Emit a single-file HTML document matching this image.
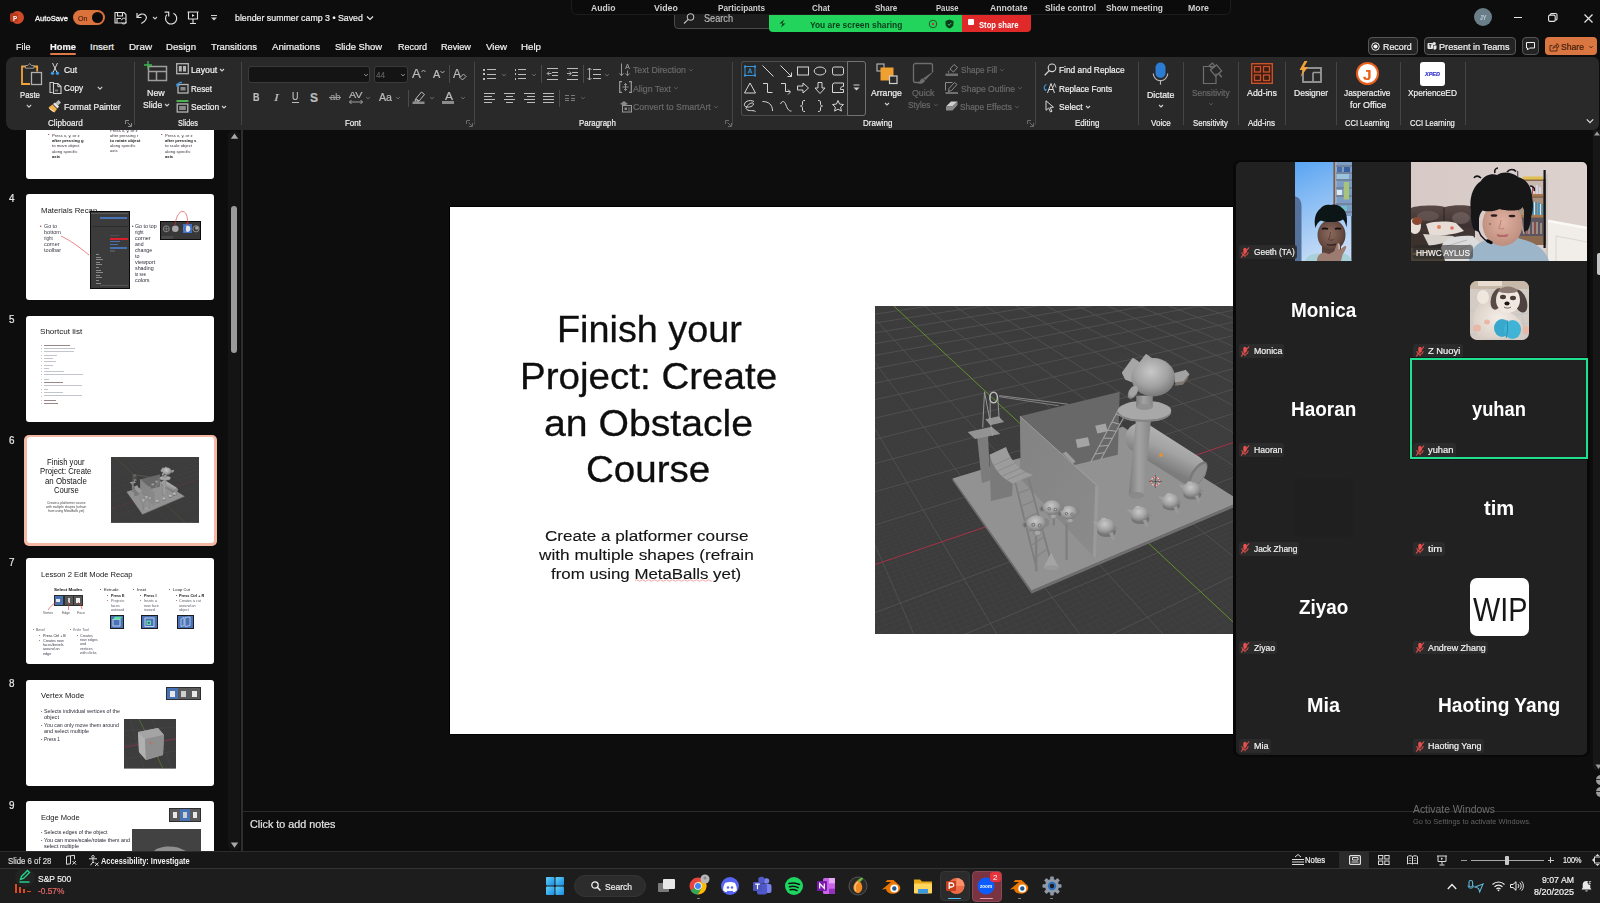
<!DOCTYPE html>
<html lang="en">
<head>
<meta charset="utf-8">
<title>blender summer camp 3 - PowerPoint</title>
<style>
*{box-sizing:border-box;margin:0;padding:0}
html,body{width:1600px;height:903px;overflow:hidden;background:#0d0d0d}
body{font-family:"Liberation Sans","DejaVu Sans",sans-serif;color:#fff;position:relative}
#root{position:absolute;left:0;top:0;width:1600px;height:903px;overflow:hidden;background:#0d0d0d}
.a{position:absolute;white-space:nowrap}
.t{position:absolute;white-space:nowrap;line-height:1;transform-origin:0 0;-webkit-text-stroke:0.2px currentColor}
svg{position:absolute;overflow:visible}
</style>
</head>
<body>
<div id="root">
<!-- ===== ribbon background ===== -->
<div class="a" id="ribbon" style="left:6px;top:57px;width:1593px;height:72.500px;background:#292929;border-radius:8px 6px 6px 8px"></div>

<!-- ===== thumbnail pane ===== -->
<div class="a" id="thumbpane" style="left:0;top:130px;width:242px;height:721px;overflow:hidden">
</div>
<div class="a" style="left:228px;top:131px;width:11.500px;height:719px;background:#141414;border-radius:5px"></div>
<div class="a" style="left:241px;top:130px;width:1.600px;height:721px;background:#2e2e2e"></div>
<!-- scrollbar -->
<div class="a" style="left:231px;top:206px;width:6px;height:147px;background:#9a9a9a;border-radius:3px"></div>
<svg style="left:230px;top:133px" width="9" height="7"><path d="M4.500 0.600L8.200 5.800H0.800Z" fill="#a8a8a8"/></svg>
<svg style="left:230px;top:842px" width="9" height="7"><path d="M0.800 0.600H8.200L4.500 5.800Z" fill="#a8a8a8"/></svg>

<!-- ===== main slide ===== -->
<div class="a" id="slide" style="left:449px;top:206px;width:786px;height:529px;background:#000"></div>
<div class="a" style="left:450px;top:207px;width:783px;height:527px;background:#fff;overflow:hidden" id="slidein">
  
</div>

<!-- notes -->
<div class="a" style="left:242px;top:811px;width:1358px;height:1px;background:#2b2b2b"></div>

<!-- ===== status bar ===== -->
<div class="a" style="left:0;top:851px;width:1600px;height:17.500px;background:#171717;border-top:1px solid #2c2c2c"></div>
<!-- ===== taskbar ===== -->
<div class="a" style="left:0;top:868px;width:1600px;height:35px;background:#1d1d1d;border-top:1px solid #333"></div>

<!-- ===== zoom gallery panel ===== -->
<div class="a" style="left:1233px;top:160px;width:357px;height:597px;background:#080808;border-radius:7px"></div>
<div class="a" id="zp" style="left:1236px;top:162px;width:351px;height:593px;background:#212121;border-radius:5px;overflow:hidden"></div>
<!-- ===== title bar ===== -->
<div class="a" style="left:11px;top:11px;width:13px;height:13px;border-radius:50%;background:#d04a28"></div>
<div class="a" style="left:10px;top:13px;width:8px;height:9px;border-radius:2px;background:#b83a1c"></div>
<div class="t" style="left:12.8px;top:15.10px;font-size:8px;color:#fff;font-weight:700;transform:scaleX(0.787);-webkit-text-stroke:0;">P</div>
<div class="t" style="left:35.0px;top:15.10px;font-size:7.8px;color:#f4f4f4;transform:scaleX(0.976);-webkit-text-stroke:0.3px #f4f4f4;">AutoSave</div>
<div class="a" style="left:73px;top:10px;width:32px;height:15px;border-radius:8px;background:#dc723c"></div>
<div class="t" style="left:78.0px;top:15.10px;font-size:7.4px;color:#5a2a10;transform:scaleX(0.962);">On</div>
<div class="a" style="left:92px;top:12px;width:11px;height:11px;border-radius:50%;background:#0a0a0a"></div>
<svg style="left:114px;top:11px" width="13" height="13"><path d="M1 1.5h9l2 2v8.5h-11z M3.5 1.5v3.5h5v-3.5 M3 12v-4.5h4" fill="none" stroke="#e0e0e0" stroke-width="1.1"/><path d="M7.5 9.2a2.4 2.4 0 0 1 4.3-1 M12 11a2.4 2.4 0 0 1-4.3 1" fill="none" stroke="#e0e0e0" stroke-width="1"/></svg>
<svg style="left:135px;top:11px" width="14" height="14"><path d="M2 2v4.5h4.5" fill="none" stroke="#e0e0e0" stroke-width="1.2"/><path d="M2.3 6.2C4 3 8 2 10.3 4.2c2.2 2.2 1.2 5.5-4 8.3" fill="none" stroke="#e0e0e0" stroke-width="1.2"/></svg>
<svg style="left:151px;top:14px" width="8" height="8"><path d="M2 3.0 L4 5.0 L6 3.0" fill="none" stroke="#c8c8c8" stroke-width="1.1"/></svg>
<svg style="left:164px;top:11px" width="14" height="14"><path d="M9.400 2.300A5.600 5.600 0 1 1 2.900 3.700" fill="none" stroke="#e0e0e0" stroke-width="1.200"/><path d="M0.600 1.200h4.100v4.300" fill="none" stroke="#e0e0e0" stroke-width="1.200"/></svg>
<svg style="left:187px;top:11px" width="12" height="14"><path d="M0.5 1h11 M1.5 1v7h9v-7 M6 8v4 M3 12.5h6" fill="none" stroke="#e0e0e0" stroke-width="1.1"/><path d="M5 3v3l2.5-1.5z" fill="#e0e0e0"/></svg>
<svg style="left:210px;top:15px" width="8" height="7"><path d="M1 0.5h6" stroke="#d0d0d0" stroke-width="1"/><path d="M1 2.5h6l-3 3z" fill="#d0d0d0"/></svg>
<div class="t" style="left:235.0px;top:13.10px;font-size:9.6px;color:#f2f2f2;transform:scaleX(0.918);">blender summer camp 3 • Saved</div>
<svg style="left:366px;top:13.5px" width="8" height="8"><path d="M1 2.5 L4 5.5 L7 2.5" fill="none" stroke="#e8e8e8" stroke-width="1.2"/></svg>
<div class="a" style="left:674px;top:4px;width:150px;height:25px;border-radius:4px;background:#1d1d1d;border:1px solid #4a4a4a"></div>
<div class="a" style="left:571px;top:-6px;width:660px;height:21px;border-radius:6px;background:#0b0b0b;border:1px solid #1c1c1c"></div>
<div class="t" style="left:591.3px;top:4.10px;font-size:9.3px;color:#cfcfcf;font-weight:700;transform:scaleX(0.926);-webkit-text-stroke:0;">Audio</div>
<div class="t" style="left:653.7px;top:4.10px;font-size:9.3px;color:#cfcfcf;font-weight:700;transform:scaleX(0.946);-webkit-text-stroke:0;">Video</div>
<div class="t" style="left:717.8px;top:4.10px;font-size:9.3px;color:#cfcfcf;font-weight:700;transform:scaleX(0.887);-webkit-text-stroke:0;">Participants</div>
<div class="t" style="left:812.0px;top:4.10px;font-size:9.3px;color:#cfcfcf;font-weight:700;transform:scaleX(0.871);-webkit-text-stroke:0;">Chat</div>
<div class="t" style="left:874.7px;top:4.10px;font-size:9.3px;color:#cfcfcf;font-weight:700;transform:scaleX(0.863);-webkit-text-stroke:0;">Share</div>
<div class="t" style="left:936.0px;top:4.10px;font-size:9.3px;color:#cfcfcf;font-weight:700;transform:scaleX(0.825);-webkit-text-stroke:0;">Pause</div>
<div class="t" style="left:990.0px;top:4.10px;font-size:9.3px;color:#cfcfcf;font-weight:700;transform:scaleX(0.931);-webkit-text-stroke:0;">Annotate</div>
<div class="t" style="left:1045.0px;top:4.10px;font-size:9.3px;color:#cfcfcf;font-weight:700;transform:scaleX(0.906);-webkit-text-stroke:0;">Slide control</div>
<div class="t" style="left:1106.0px;top:4.10px;font-size:9.3px;color:#cfcfcf;font-weight:700;transform:scaleX(0.904);-webkit-text-stroke:0;">Show meeting</div>
<div class="t" style="left:1187.5px;top:4.10px;font-size:9.3px;color:#cfcfcf;font-weight:700;transform:scaleX(0.945);-webkit-text-stroke:0;">More</div>
<svg style="left:683px;top:13px" width="12" height="11"><circle cx="7.5" cy="4" r="3.2" fill="none" stroke="#bdbdbd" stroke-width="1.1"/><path d="M5.2 6.3L1 10.5" stroke="#bdbdbd" stroke-width="1.2"/></svg>
<div class="t" style="left:704.0px;top:13.10px;font-size:11px;color:#b8b8b8;transform:scaleX(0.832);">Search</div>
<div class="a" style="left:769px;top:15px;width:194px;height:17px;border-radius:0 0 0 4px;background:#23d45c"></div>
<div class="a" style="left:962px;top:15px;width:69px;height:17px;border-radius:0 0 4px 0;background:#e02a2a"></div>
<div class="t" style="left:809.5px;top:21.10px;font-size:9.2px;color:#0b3d1a;font-weight:700;transform:scaleX(0.915);-webkit-text-stroke:0;">You are screen sharing</div>
<svg style="left:778px;top:19px" width="9" height="9"><path d="M6 0.5L1.5 4.5h3L3 8.5l4.5-4h-3z" fill="#0b3d1a"/></svg>
<svg style="left:928px;top:19px" width="10" height="10"><circle cx="5" cy="5" r="3.8" fill="none" stroke="#14602a" stroke-width="1"/><circle cx="5" cy="5" r="1.2" fill="#d03030"/></svg>
<svg style="left:945px;top:19px" width="9" height="10"><path d="M4.5 0.5L8.5 2v3c0 2-1.6 3.6-4 4.5C2.1 8.6 0.5 7 0.5 5V2z" fill="#0b3d1a"/><path d="M2.8 5l1.3 1.3L6.4 3.8" stroke="#23d45c" stroke-width="1" fill="none"/></svg>
<div class="a" style="left:968px;top:19px;width:6px;height:6px;border-radius:1px;background:#fff"></div>
<div class="t" style="left:979.0px;top:21.10px;font-size:9.2px;color:#fff;font-weight:700;transform:scaleX(0.831);-webkit-text-stroke:0;">Stop share</div>
<div class="a" style="left:1474px;top:8px;width:18px;height:18px;border-radius:50%;background:#6a7e88"></div>
<div class="t" style="left:1479.7px;top:15.10px;font-size:6.5px;color:#c0d2dc;transform:scaleX(0.857);">JY</div>
<div class="a" style="left:1513.7px;top:16.6px;width:8.4px;height:1.1px;background:#e6e6e6;"></div>
<svg style="left:1548px;top:13px" width="10" height="9"><rect x="0.6" y="2.1" width="6.6" height="6.3" rx="1.3" fill="none" stroke="#e6e6e6" stroke-width="1.1"/><path d="M2.3 2V1.8a1.300 1.300 0 0 1 1.300-1.300h4.100a1.300 1.300 0 0 1 1.300 1.300v3.900a1.300 1.300 0 0 1-1.300 1.300h-.4" fill="none" stroke="#e6e6e6" stroke-width="1.100"/></svg>
<svg style="left:1584px;top:13.5px" width="9" height="9"><path d="M0.5 0.5l8 8M8.5 0.5l-8 8" stroke="#e6e6e6" stroke-width="1.2"/></svg>
<!-- ===== tabs ===== -->
<div class="t" style="left:15.5px;top:42.10px;font-size:9.6px;color:#f2f2f2;transform:scaleX(0.937);">File</div>
<div class="t" style="left:50.0px;top:42.10px;font-size:9.6px;color:#f2f2f2;font-weight:700;transform:scaleX(0.975);">Home</div>
<div class="t" style="left:90.0px;top:42.10px;font-size:9.6px;color:#f2f2f2;transform:scaleX(1.000);">Insert</div>
<div class="t" style="left:129.0px;top:42.10px;font-size:9.6px;color:#f2f2f2;transform:scaleX(1.027);">Draw</div>
<div class="t" style="left:166.0px;top:42.10px;font-size:9.6px;color:#f2f2f2;transform:scaleX(1.004);">Design</div>
<div class="t" style="left:211.0px;top:42.10px;font-size:9.6px;color:#f2f2f2;transform:scaleX(0.987);">Transitions</div>
<div class="t" style="left:272.0px;top:42.10px;font-size:9.6px;color:#f2f2f2;transform:scaleX(1.011);">Animations</div>
<div class="t" style="left:335.0px;top:42.10px;font-size:9.6px;color:#f2f2f2;transform:scaleX(0.979);">Slide Show</div>
<div class="t" style="left:397.5px;top:42.10px;font-size:9.6px;color:#f2f2f2;transform:scaleX(0.937);">Record</div>
<div class="t" style="left:441.0px;top:42.10px;font-size:9.6px;color:#f2f2f2;transform:scaleX(0.953);">Review</div>
<div class="t" style="left:486.0px;top:42.10px;font-size:9.6px;color:#f2f2f2;transform:scaleX(1.018);">View</div>
<div class="t" style="left:521.0px;top:42.10px;font-size:9.6px;color:#f2f2f2;transform:scaleX(1.013);">Help</div>
<div class="a" style="left:50px;top:53px;width:26px;height:2px;border-radius:1px;background:#e0794a"></div>
<div class="a" style="left:1367.5px;top:37.2px;width:50.0px;height:17.8px;border-radius:4px;background:#232323;border:1px solid #565656"></div>
<svg style="left:1371px;top:42px" width="9" height="9"><circle cx="4.500" cy="4.500" r="3.800" fill="none" stroke="#f0f0f0" stroke-width="1"/><circle cx="4.500" cy="4.500" r="2.100" fill="#f0f0f0"/></svg>
<div class="t" style="left:1383.0px;top:42.10px;font-size:9.6px;color:#f2f2f2;transform:scaleX(0.924);">Record</div>
<div class="a" style="left:1423.5px;top:37.2px;width:92.0px;height:17.8px;border-radius:4px;background:#232323;border:1px solid #565656"></div>
<svg style="left:1427px;top:41px" width="10" height="10"><rect x="0.5" y="2" width="5.500" height="6" rx="1" fill="#e8e8e8"/><circle cx="7.200" cy="2.500" r="1.600" fill="#e8e8e8"/><path d="M6.500 4.500h3v2.700a1.800 1.800 0 0 1-3 1z" fill="#e8e8e8"/><path d="M2 3.700h2.500M3.250 3.700v3" stroke="#222" stroke-width=".9"/></svg>
<div class="t" style="left:1439.4px;top:42.10px;font-size:9.6px;color:#f2f2f2;transform:scaleX(0.954);">Present in Teams</div>
<div class="a" style="left:1522px;top:37.2px;width:16.5px;height:17.8px;border-radius:4px;background:#232323;border:1px solid #565656"></div>
<svg style="left:1525.5px;top:42px" width="10" height="9"><path d="M0.5 0.5h8v5.500h-5l-2 2v-2h-1z" fill="none" stroke="#f0f0f0" stroke-width="1"/></svg>
<div class="a" style="left:1545px;top:37.2px;width:52.2px;height:17.8px;border-radius:4px;background:#da7641"></div>
<svg style="left:1549px;top:41.5px" width="10" height="10"><path d="M3.500 3.500h-2.500v5.500h7v-2 M4 6.500c.3-2 1.600-3.300 4-3.300v-1.700l2 2.500-2 2.500v-1.700c-1.800 0-3 .5-4 1.700z" fill="none" stroke="#4a2410" stroke-width=".9"/></svg>
<div class="t" style="left:1561.0px;top:42.10px;font-size:9.6px;color:#3c1c0c;transform:scaleX(0.898);">Share</div>
<svg style="left:1587px;top:43px" width="8" height="8"><path d="M2.4 3.2 L4 4.8 L5.6 3.2" fill="none" stroke="#4a2410" stroke-width="1"/></svg>
<!-- ===== ribbon: Clipboard ===== -->
<svg style="left:20px;top:62px" width="24" height="24"><path d="M5.500 4.500h-3.500v17.500h8" fill="none" stroke="#f2a33a" stroke-width="1.800"/><path d="M14 4.500h3.200v5" fill="none" stroke="#f2a33a" stroke-width="1.800"/><path d="M5.500 6.200v-2.700h2.500l1.700-2 1.700 2h2.500v2.700z" fill="#292929" stroke="#9a9a9a" stroke-width="1"/><rect x="11.500" y="10.500" width="10" height="12" fill="#292929" stroke="#b0b0b0" stroke-width="1.300"/></svg>
<div class="t" style="left:19.6px;top:90.10px;font-size:9.4px;color:#f2f2f2;transform:scaleX(0.828);">Paste</div>
<svg style="left:25px;top:101.5px" width="8" height="8"><path d="M1.7999999999999998 2.9 L4 5.1 L6.2 2.9" fill="none" stroke="#d0d0d0" stroke-width="1.1"/></svg>
<svg style="left:50px;top:62px" width="10" height="14"><path d="M2.500 1l4.500 9.500M7.500 1l-4.500 9.500" stroke="#d8d8d8" stroke-width="1"/><circle cx="2.500" cy="11.300" r="1.700" fill="#3a96dd"/><circle cx="7.500" cy="11.300" r="1.700" fill="#3a96dd"/></svg>
<div class="t" style="left:63.8px;top:65.10px;font-size:9.4px;color:#f2f2f2;transform:scaleX(0.902);">Cut</div>
<svg style="left:48.5px;top:80.5px" width="13" height="14"><path d="M3.500 11.500h-2.500v-10h4" fill="none" stroke="#c8c8c8" stroke-width="1.100"/><path d="M4.500 2.500h4.500l3 3v7h-7.500z" fill="#292929" stroke="#d0d0d0" stroke-width="1.100"/><path d="M8.800 2.700v3h3" fill="none" stroke="#d0d0d0" stroke-width="1"/><rect x="6" y="8.500" width="3" height="2" fill="#777"/></svg>
<div class="t" style="left:63.8px;top:83.10px;font-size:9.4px;color:#f2f2f2;transform:scaleX(0.875);">Copy</div>
<svg style="left:96.3px;top:83.7px" width="8" height="8"><path d="M1.7999999999999998 2.9 L4 5.1 L6.2 2.9" fill="none" stroke="#d0d0d0" stroke-width="1.1"/></svg>
<svg style="left:48px;top:99px" width="14" height="14"><path d="M7.500 4l3-3 2.500 2.500-3 3z" fill="#bdbdbd"/><path d="M5 5l2-1.500 4 4-1.500 2z" fill="#e8e8e8"/><path d="M4.500 5.500l-4 3c1.500 2.500 3.500 4 6 5l2.500-3.500z" fill="#f2b14a"/><path d="M1.500 9.500l4.500 3" stroke="#fff" stroke-width=".8"/></svg>
<div class="t" style="left:63.8px;top:102.10px;font-size:9.4px;color:#f2f2f2;transform:scaleX(0.912);">Format Painter</div>
<div class="t" style="left:48.0px;top:118.10px;font-size:9.4px;color:#f2f2f2;transform:scaleX(0.865);">Clipboard</div>
<svg style="left:125px;top:120px" width="7" height="7"><path d="M0.5 4V0.5H4 M6.5 3V6.5H3 M2.5 2.5L6 6" fill="none" stroke="#8a8a8a" stroke-width="1"/></svg>
<div class="a" style="left:134px;top:62px;width:1px;height:63px;background:#454545;"></div>
<!-- ===== ribbon: Slides ===== -->
<svg style="left:144px;top:61px" width="24" height="22"><rect x="4.500" y="5.500" width="18" height="14" fill="none" stroke="#9e9e9e" stroke-width="1.500"/><path d="M4.500 10.500h18M12.500 10.500v9" stroke="#9e9e9e" stroke-width="1.500"/><path d="M4 0v8M0 4h8" stroke="#3fb950" stroke-width="1.300"/></svg>
<div class="t" style="left:147.2px;top:88.10px;font-size:9.4px;color:#f2f2f2;transform:scaleX(0.947);">New</div>
<div class="t" style="left:142.7px;top:100.10px;font-size:9.4px;color:#f2f2f2;transform:scaleX(0.923);">Slide</div>
<svg style="left:162.5px;top:101px" width="8" height="8"><path d="M2 3.0 L4 5.0 L6 3.0" fill="none" stroke="#d0d0d0" stroke-width="1.1"/></svg>
<svg style="left:175.5px;top:62.5px" width="13" height="12"><rect x="0.700" y="0.700" width="11.600" height="10" fill="none" stroke="#b4b4b4" stroke-width="1.300"/><rect x="2.800" y="3" width="3" height="5.500" fill="#b4b4b4"/><rect x="7" y="3" width="3" height="5.500" fill="#b4b4b4"/></svg>
<div class="t" style="left:191.0px;top:65.10px;font-size:9.4px;color:#f2f2f2;transform:scaleX(0.932);">Layout</div>
<svg style="left:218px;top:65.5px" width="8" height="8"><path d="M2 3.0 L4 5.0 L6 3.0" fill="none" stroke="#d0d0d0" stroke-width="1.1"/></svg>
<svg style="left:175.5px;top:80.5px" width="13" height="13"><rect x="2" y="3.500" width="10" height="8.500" fill="none" stroke="#b4b4b4" stroke-width="1.300"/><rect x="4.500" y="6" width="5" height="3.500" fill="#8a8a8a"/><path d="M1 5.500c0-3 2.500-4.500 5-4" fill="none" stroke="#3a96dd" stroke-width="1.300"/><path d="M0 2.500l1 3.500 3-1.500z" fill="#3a96dd"/></svg>
<div class="t" style="left:191.0px;top:84.10px;font-size:9.4px;color:#f2f2f2;transform:scaleX(0.855);">Reset</div>
<svg style="left:175.5px;top:99.5px" width="13" height="13"><rect x="0.500" y="0" width="12" height="2" fill="#4caf50"/><rect x="1.200" y="4" width="10.600" height="8" fill="none" stroke="#b4b4b4" stroke-width="1.300"/><rect x="3.200" y="6" width="6.600" height="4" fill="#8a8a8a"/></svg>
<div class="t" style="left:191.0px;top:102.10px;font-size:9.4px;color:#f2f2f2;transform:scaleX(0.903);">Section</div>
<svg style="left:220px;top:102.5px" width="8" height="8"><path d="M2 3.0 L4 5.0 L6 3.0" fill="none" stroke="#d0d0d0" stroke-width="1.1"/></svg>
<div class="t" style="left:178.0px;top:118.10px;font-size:9.4px;color:#f2f2f2;transform:scaleX(0.781);">Slides</div>
<div class="a" style="left:241px;top:62px;width:1px;height:63px;background:#454545;"></div>
<!-- ===== ribbon: Font ===== -->
<div class="a" style="left:248px;top:66px;width:122px;height:16.500px;border-radius:3px;background:#141414;border:1px solid #3a3a3a"></div>
<svg style="left:362px;top:71px" width="8" height="8"><path d="M2.2 3.1 L4 4.9 L5.8 3.1" fill="none" stroke="#9a9a9a" stroke-width="1"/></svg>
<div class="a" style="left:374px;top:66px;width:33.500px;height:16.500px;border-radius:3px;background:#141414;border:1px solid #3a3a3a"></div>
<div class="t" style="left:375.5px;top:70.10px;font-size:9.5px;color:#5e5e5e;transform:scaleX(0.852);">44</div>
<svg style="left:398.5px;top:71px" width="8" height="8"><path d="M2.2 3.1 L4 4.9 L5.8 3.1" fill="none" stroke="#9a9a9a" stroke-width="1"/></svg>
<div class="t" style="left:412.0px;top:67.10px;font-size:13px;color:#bcbcbc;transform:scaleX(1.015);">A</div>
<svg style="left:420.5px;top:68.5px" width="5" height="4"><path d="M0.500 3l2-2 2 2" fill="none" stroke="#bcbcbc" stroke-width=".9"/></svg>
<div class="t" style="left:433.0px;top:70.10px;font-size:10px;color:#bcbcbc;transform:scaleX(1.079);">A</div>
<svg style="left:439.8px;top:69.5px" width="5" height="4"><path d="M0.500 1l2 2 2-2" fill="none" stroke="#bcbcbc" stroke-width=".9"/></svg>
<div class="a" style="left:449px;top:65px;width:1px;height:18px;background:#4a4a4a;"></div>
<div class="t" style="left:453.0px;top:68.10px;font-size:12.5px;color:#bcbcbc;transform:scaleX(0.960);">A</div>
<svg style="left:459px;top:73px" width="8" height="8"><path d="M1 4.500l3.500-3.500 2.500 2.500-3.500 3.500z" fill="#292929" stroke="#bcbcbc" stroke-width=".9"/></svg>
<div class="t" style="left:253.0px;top:92.10px;font-size:11px;color:#bcbcbc;font-weight:700;transform:scaleX(0.818);">B</div>
<div class="t" style="left:273.5px;top:92.10px;font-size:11px;color:#bcbcbc;font-style:italic;transform:scaleX(1.309);font-family:'Liberation Serif',serif;">I</div>
<div class="t" style="left:292.0px;top:92.10px;font-size:10px;color:#bcbcbc;transform:scaleX(0.900);">U</div>
<div class="a" style="left:292px;top:101.5px;width:6.5px;height:1px;background:#bcbcbc;"></div>
<div class="t" style="left:310.0px;top:92.10px;font-size:12px;color:#bcbcbc;font-weight:700;transform:scaleX(1.000);">S</div>
<div class="t" style="left:329.5px;top:93.10px;font-size:9px;color:#9a9a9a;transform:scaleX(1.049);">ab</div>
<div class="a" style="left:328.5px;top:97px;width:12.5px;height:1px;background:#9a9a9a;"></div>
<div class="t" style="left:348.5px;top:90.10px;font-size:9.5px;color:#bcbcbc;transform:scaleX(1.128);">AV</div>
<svg style="left:348.5px;top:99.5px" width="14" height="4"><path d="M0.500 2h13M2.500 0l-2 2 2 2M11.500 0l2 2-2 2" fill="none" stroke="#bcbcbc" stroke-width=".8"/></svg>
<svg style="left:363.5px;top:93.5px" width="8" height="8"><path d="M2.2 3.1 L4 4.9 L5.8 3.1" fill="none" stroke="#707070" stroke-width="1"/></svg>
<div class="t" style="left:379.0px;top:92.10px;font-size:10.5px;color:#bcbcbc;transform:scaleX(1.012);">Aa</div>
<svg style="left:393.5px;top:93.5px" width="8" height="8"><path d="M2.2 3.1 L4 4.9 L5.8 3.1" fill="none" stroke="#707070" stroke-width="1"/></svg>
<div class="a" style="left:408px;top:90px;width:1px;height:17px;background:#4a4a4a;"></div>
<svg style="left:411.5px;top:91px" width="14" height="13"><path d="M4 7.500l5.500-6.500 3 2.500-5.500 6.500z M3.500 8l3 2.500-3.500.8z" fill="none" stroke="#bcbcbc" stroke-width="1"/><rect x="0.500" y="10.500" width="12" height="2.500" fill="#8c8c8c"/></svg>
<svg style="left:428px;top:93.5px" width="8" height="8"><path d="M2.2 3.1 L4 4.9 L5.8 3.1" fill="none" stroke="#707070" stroke-width="1"/></svg>
<div class="t" style="left:444.5px;top:92.10px;font-size:10.2px;color:#bcbcbc;transform:scaleX(1.176);">A</div>
<div class="a" style="left:442px;top:101px;width:12px;height:2.5px;background:#8c8c8c;"></div>
<svg style="left:459px;top:93.5px" width="8" height="8"><path d="M2.2 3.1 L4 4.9 L5.8 3.1" fill="none" stroke="#707070" stroke-width="1"/></svg>
<div class="t" style="left:344.5px;top:118.10px;font-size:9.4px;color:#f2f2f2;transform:scaleX(0.851);">Font</div>
<svg style="left:466px;top:120px" width="7" height="7"><path d="M0.5 4V0.5H4 M6.5 3V6.5H3 M2.5 2.5L6 6" fill="none" stroke="#6a6a6a" stroke-width="1"/></svg>
<div class="a" style="left:474px;top:62px;width:1px;height:63px;background:#454545;"></div>
<!-- ===== ribbon: Paragraph ===== -->
<div class="a" style="left:483px;top:68.5px;width:2px;height:2px;background:#bcbcbc;"></div>
<div class="a" style="left:487px;top:69.0px;width:8.5px;height:1.2px;background:#bcbcbc;"></div>
<div class="a" style="left:483px;top:73.0px;width:2px;height:2px;background:#bcbcbc;"></div>
<div class="a" style="left:487px;top:73.5px;width:8.5px;height:1.2px;background:#bcbcbc;"></div>
<div class="a" style="left:483px;top:77.5px;width:2px;height:2px;background:#bcbcbc;"></div>
<div class="a" style="left:487px;top:78.0px;width:8.5px;height:1.2px;background:#bcbcbc;"></div>
<svg style="left:499.5px;top:71px" width="8" height="8"><path d="M2.2 3.1 L4 4.9 L5.8 3.1" fill="none" stroke="#707070" stroke-width="1"/></svg>
<div class="a" style="left:514.5px;top:68.5px;width:1.2px;height:2.2px;background:#bcbcbc;"></div>
<div class="a" style="left:518px;top:69.0px;width:8px;height:1.2px;background:#bcbcbc;"></div>
<div class="a" style="left:514.5px;top:73.0px;width:1.2px;height:2.2px;background:#bcbcbc;"></div>
<div class="a" style="left:518px;top:73.5px;width:8px;height:1.2px;background:#bcbcbc;"></div>
<div class="a" style="left:514.5px;top:77.5px;width:1.2px;height:2.2px;background:#bcbcbc;"></div>
<div class="a" style="left:518px;top:78.0px;width:8px;height:1.2px;background:#bcbcbc;"></div>
<svg style="left:530px;top:71px" width="8" height="8"><path d="M2.2 3.1 L4 4.9 L5.8 3.1" fill="none" stroke="#707070" stroke-width="1"/></svg>
<div class="a" style="left:541px;top:65px;width:1px;height:18px;background:#4a4a4a;"></div>
<div class="a" style="left:547px;top:68.0px;width:11px;height:1.2px;background:#bcbcbc;"></div>
<div class="a" style="left:552px;top:71.6px;width:6px;height:1.2px;background:#bcbcbc;"></div>
<div class="a" style="left:552px;top:75.2px;width:6px;height:1.2px;background:#bcbcbc;"></div>
<div class="a" style="left:547px;top:78.8px;width:11px;height:1.2px;background:#bcbcbc;"></div>
<svg style="left:546.5px;top:71px" width="5" height="5"><path d="M4.500 2.500h-4M2.200 0.500l-2 2 2 2" fill="none" stroke="#bcbcbc" stroke-width=".9"/></svg>
<div class="a" style="left:567px;top:68.0px;width:11px;height:1.2px;background:#bcbcbc;"></div>
<div class="a" style="left:572px;top:71.6px;width:6px;height:1.2px;background:#bcbcbc;"></div>
<div class="a" style="left:572px;top:75.2px;width:6px;height:1.2px;background:#bcbcbc;"></div>
<div class="a" style="left:567px;top:78.8px;width:11px;height:1.2px;background:#bcbcbc;"></div>
<svg style="left:566.5px;top:71px" width="5" height="5"><path d="M0 2.500h4M2.300 0.500l2 2-2 2" fill="none" stroke="#bcbcbc" stroke-width=".9"/></svg>
<div class="a" style="left:583px;top:65px;width:1px;height:18px;background:#4a4a4a;"></div>
<div class="a" style="left:592.5px;top:69.0px;width:8px;height:1.2px;background:#bcbcbc;"></div>
<div class="a" style="left:592.5px;top:73.5px;width:8px;height:1.2px;background:#bcbcbc;"></div>
<div class="a" style="left:592.5px;top:78.0px;width:8px;height:1.2px;background:#bcbcbc;"></div>
<svg style="left:587px;top:67px" width="5" height="14"><path d="M2.500 1v12M0.500 3l2-2 2 2M0.500 11l2 2 2-2" fill="none" stroke="#bcbcbc" stroke-width=".9"/></svg>
<svg style="left:602.5px;top:71px" width="8" height="8"><path d="M2.2 3.1 L4 4.9 L5.8 3.1" fill="none" stroke="#707070" stroke-width="1"/></svg>
<div class="a" style="left:484px;top:92.5px;width:11px;height:1.2px;background:#bcbcbc;"></div>
<div class="a" style="left:484px;top:95.7px;width:8px;height:1.2px;background:#bcbcbc;"></div>
<div class="a" style="left:484px;top:98.9px;width:11px;height:1.2px;background:#bcbcbc;"></div>
<div class="a" style="left:484px;top:102.1px;width:8px;height:1.2px;background:#bcbcbc;"></div>
<div class="a" style="left:504px;top:92.5px;width:11px;height:1.2px;background:#bcbcbc;"></div>
<div class="a" style="left:506px;top:95.7px;width:7px;height:1.2px;background:#bcbcbc;"></div>
<div class="a" style="left:504px;top:98.9px;width:11px;height:1.2px;background:#bcbcbc;"></div>
<div class="a" style="left:506px;top:102.1px;width:7px;height:1.2px;background:#bcbcbc;"></div>
<div class="a" style="left:523.5px;top:92.5px;width:11px;height:1.2px;background:#bcbcbc;"></div>
<div class="a" style="left:526.5px;top:95.7px;width:8px;height:1.2px;background:#bcbcbc;"></div>
<div class="a" style="left:523.5px;top:98.9px;width:11px;height:1.2px;background:#bcbcbc;"></div>
<div class="a" style="left:526.5px;top:102.1px;width:8px;height:1.2px;background:#bcbcbc;"></div>
<div class="a" style="left:543px;top:92.5px;width:11px;height:1.2px;background:#bcbcbc;"></div>
<div class="a" style="left:543px;top:95.7px;width:11px;height:1.2px;background:#bcbcbc;"></div>
<div class="a" style="left:543px;top:98.9px;width:11px;height:1.2px;background:#bcbcbc;"></div>
<div class="a" style="left:543px;top:102.1px;width:11px;height:1.2px;background:#bcbcbc;"></div>
<div class="a" style="left:559px;top:90px;width:1px;height:17px;background:#4a4a4a;"></div>
<div class="a" style="left:565px;top:95.0px;width:4px;height:1px;background:#7a7a7a;"></div>
<div class="a" style="left:565px;top:97.6px;width:4px;height:1px;background:#7a7a7a;"></div>
<div class="a" style="left:565px;top:100.2px;width:4px;height:1px;background:#7a7a7a;"></div>
<div class="a" style="left:571px;top:95.0px;width:4px;height:1px;background:#7a7a7a;"></div>
<div class="a" style="left:571px;top:97.6px;width:4px;height:1px;background:#7a7a7a;"></div>
<div class="a" style="left:571px;top:100.2px;width:4px;height:1px;background:#7a7a7a;"></div>
<svg style="left:578.5px;top:94px" width="8" height="8"><path d="M2.2 3.1 L4 4.9 L5.8 3.1" fill="none" stroke="#606060" stroke-width="1"/></svg>
<svg style="left:619px;top:62.5px" width="12" height="14"><path d="M2.500 0.500v12M0.500 10.500l2 2.200 2-2.200" fill="none" stroke="#9a9a9a" stroke-width="1"/><path d="M6.500 6l2-5 2 5M7.200 4.300h2.600" fill="none" stroke="#9a9a9a" stroke-width=".9"/><path d="M8.500 7.500v5M6.500 10.500l2 2.200 2-2.200" fill="none" stroke="#9a9a9a" stroke-width=".9"/></svg>
<div class="t" style="left:633.0px;top:65.10px;font-size:9.4px;color:#6a6a6a;transform:scaleX(0.931);">Text Direction</div>
<svg style="left:687px;top:65.5px" width="8" height="8"><path d="M2.2 3.1 L4 4.9 L5.8 3.1" fill="none" stroke="#5a5a5a" stroke-width="1"/></svg>
<svg style="left:618.5px;top:81px" width="13" height="12"><path d="M3 0.700h-2.300v10.600h2.300M10 0.700h2.300v10.600h-2.300" fill="none" stroke="#9a9a9a" stroke-width="1.200"/><path d="M3.500 6h6M6.500 2.500v7M5 4l1.500-1.500 1.500 1.500M5 8l1.500 1.500 1.500-1.500" fill="none" stroke="#9a9a9a" stroke-width=".9"/></svg>
<div class="t" style="left:633.0px;top:84.10px;font-size:9.4px;color:#6a6a6a;transform:scaleX(0.936);">Align Text</div>
<svg style="left:672px;top:84px" width="8" height="8"><path d="M2.2 3.1 L4 4.9 L5.8 3.1" fill="none" stroke="#5a5a5a" stroke-width="1"/></svg>
<svg style="left:618.5px;top:99.5px" width="13" height="13"><path d="M1 4l4-3 4 3-4 1.500z" fill="#8a8a8a"/><rect x="3.500" y="5.500" width="9" height="6.500" fill="#292929" stroke="#9a9a9a" stroke-width="1"/><rect x="5.500" y="7.500" width="2.500" height="2.500" fill="#8a8a8a"/><path d="M9 8h2.500M9 10h2.500" stroke="#8a8a8a" stroke-width=".8"/></svg>
<div class="t" style="left:633.0px;top:102.10px;font-size:9.4px;color:#6a6a6a;transform:scaleX(0.939);">Convert to SmartArt</div>
<svg style="left:711.5px;top:102.5px" width="8" height="8"><path d="M2.2 3.1 L4 4.9 L5.8 3.1" fill="none" stroke="#5a5a5a" stroke-width="1"/></svg>
<div class="t" style="left:579.0px;top:118.10px;font-size:9.4px;color:#f2f2f2;transform:scaleX(0.843);">Paragraph</div>
<svg style="left:725px;top:120px" width="7" height="7"><path d="M0.5 4V0.5H4 M6.5 3V6.5H3 M2.5 2.5L6 6" fill="none" stroke="#6a6a6a" stroke-width="1"/></svg>
<div class="a" style="left:732px;top:62px;width:1px;height:63px;background:#454545;"></div>
<!-- ===== ribbon: Drawing ===== -->
<div class="a" style="left:740.500px;top:61px;width:108px;height:55px;border-radius:3px 0 0 3px;border:1px solid #4c4c4c;border-right:0"></div>
<div class="a" style="left:847px;top:61px;width:18.500px;height:55px;border-radius:0 3px 3px 0;border:1.200px solid #727272"></div>
<svg style="left:852px;top:84px" width="9" height="8"><path d="M1.500 1h6" stroke="#d0d0d0" stroke-width="1"/><path d="M1.500 3.500h6l-3 3z" fill="#d0d0d0"/></svg>
<svg style="left:743px;top:63.5px" width="14" height="14" viewBox="-7 -7 14 14"><g fill="none" stroke="#d6d6d6" stroke-width="1"><rect x="-5" y="-4.500" width="10" height="9" stroke="#3a96dd"/><rect x="-6" y="-5.500" width="2" height="2" fill="#3a96dd" stroke="none"/><rect x="4" y="-5.500" width="2" height="2" fill="#3a96dd" stroke="none"/><rect x="-6" y="3.500" width="2" height="2" fill="#3a96dd" stroke="none"/><rect x="4" y="3.500" width="2" height="2" fill="#3a96dd" stroke="none"/><path d="M-2 2.500l2-5 2 5M-1.200 1h2.400" stroke="#3a96dd" stroke-width=".9"/></g></svg>
<svg style="left:760.5px;top:63.5px" width="14" height="14" viewBox="-7 -7 14 14"><g fill="none" stroke="#d6d6d6" stroke-width="1"><path d="M-5.500 -5.500l11 11"/></g></svg>
<svg style="left:778.5px;top:63.5px" width="14" height="14" viewBox="-7 -7 14 14"><g fill="none" stroke="#d6d6d6" stroke-width="1"><path d="M-5.500 -5.500l11 11M5.500 1.500v4h-4"/></g></svg>
<svg style="left:795.5px;top:63.5px" width="14" height="14" viewBox="-7 -7 14 14"><g fill="none" stroke="#d6d6d6" stroke-width="1"><rect x="-5.500" y="-4" width="11" height="8"/></g></svg>
<svg style="left:813px;top:63.5px" width="14" height="14" viewBox="-7 -7 14 14"><g fill="none" stroke="#d6d6d6" stroke-width="1"><ellipse cx="0" cy="0" rx="5.800" ry="4"/></g></svg>
<svg style="left:830.5px;top:63.5px" width="14" height="14" viewBox="-7 -7 14 14"><g fill="none" stroke="#d6d6d6" stroke-width="1"><rect x="-5.500" y="-4" width="11" height="8" rx="1.800"/></g></svg>
<svg style="left:743px;top:81px" width="14" height="14" viewBox="-7 -7 14 14"><g fill="none" stroke="#d6d6d6" stroke-width="1"><path d="M0 -5l5.500 10h-11z"/></g></svg>
<svg style="left:760.5px;top:81px" width="14" height="14" viewBox="-7 -7 14 14"><g fill="none" stroke="#d6d6d6" stroke-width="1"><path d="M-5 -4.500h4.500v9h5"/></g></svg>
<svg style="left:778.5px;top:81px" width="14" height="14" viewBox="-7 -7 14 14"><g fill="none" stroke="#d6d6d6" stroke-width="1"><path d="M-5 -4.500h4.500v8h4.500M2 1.500l2.500 2.500-2.500 2.500" /></g></svg>
<svg style="left:795.5px;top:81px" width="14" height="14" viewBox="-7 -7 14 14"><g fill="none" stroke="#d6d6d6" stroke-width="1"><path d="M-5.500 -2h5.500v-3l5.500 5-5.500 5v-3h-5.500z"/></g></svg>
<svg style="left:813px;top:81px" width="14" height="14" viewBox="-7 -7 14 14"><g fill="none" stroke="#d6d6d6" stroke-width="1"><path d="M-2 -5.500h4v5.500h3l-5 5.500-5-5.500h3z"/></g></svg>
<svg style="left:830.5px;top:81px" width="14" height="14" viewBox="-7 -7 14 14"><g fill="none" stroke="#d6d6d6" stroke-width="1"><path d="M-5.500 4.500v-7.500a2 2 0 0 1 2-2h9v3.500a2.500 2.500 0 0 0-3 3h3v3z"/></g></svg>
<svg style="left:743px;top:98.8px" width="14" height="14" viewBox="-7 -7 14 14"><g fill="none" stroke="#d6d6d6" stroke-width="1"><path d="M4 -4.500C-1 -7 -6.500 -4 -5.500 -0.500C-4.500 2.500 3.500 1 3.500 -2C3.500 -4.500 -2.500 -2.500 -4 2.500C-2 6 2.500 3.500 5.500 5.500"/></g></svg>
<svg style="left:760.5px;top:98.8px" width="14" height="14" viewBox="-7 -7 14 14"><g fill="none" stroke="#d6d6d6" stroke-width="1"><path d="M-5.500 -4.500c6 0 10 3 10 9.500"/></g></svg>
<svg style="left:778.5px;top:98.8px" width="14" height="14" viewBox="-7 -7 14 14"><g fill="none" stroke="#d6d6d6" stroke-width="1"><path d="M-5.500 -2C-4 -5.500 -1.500 -5.500 0 -1S3.500 5.500 5.500 5"/></g></svg>
<svg style="left:795.5px;top:98.8px" width="14" height="14" viewBox="-7 -7 14 14"><g fill="none" stroke="#d6d6d6" stroke-width="1"><path d="M2 -5.500c-2.500 0-2.500 0.500-2.500 2.500s0 3-2 3c2 0 2 1 2 3s0 2.500 2.500 2.500"/></g></svg>
<svg style="left:813px;top:98.8px" width="14" height="14" viewBox="-7 -7 14 14"><g fill="none" stroke="#d6d6d6" stroke-width="1"><path d="M-2 -5.500c2.500 0 2.500 0.500 2.500 2.500s0 3 2 3c-2 0-2 1-2 3s0 2.500-2.500 2.500"/></g></svg>
<svg style="left:830.5px;top:98.8px" width="14" height="14" viewBox="-7 -7 14 14"><g fill="none" stroke="#d6d6d6" stroke-width="1"><path d="M0 -5.500l1.600 3.600 3.900.4-2.900 2.700.8 3.900-3.400-2-3.400 2 .8-3.900-2.900-2.700 3.900-.4z"/></g></svg>
<svg style="left:875.5px;top:62.5px" width="23" height="22"><rect x="1" y="1" width="7" height="7" fill="#292929" stroke="#b0b0b0" stroke-width="1.200"/><rect x="4.500" y="4.500" width="13" height="13" fill="#f0a030"/><rect x="13.500" y="13" width="7.500" height="7.500" fill="#292929" stroke="#d0d0d0" stroke-width="1.200"/></svg>
<div class="t" style="left:871.0px;top:88.10px;font-size:9.4px;color:#f2f2f2;transform:scaleX(0.927);">Arrange</div>
<svg style="left:882.5px;top:100px" width="8" height="8"><path d="M2 3.0 L4 5.0 L6 3.0" fill="none" stroke="#d0d0d0" stroke-width="1.1"/></svg>
<svg style="left:912px;top:62.5px" width="24" height="22"><path d="M20.500 9v-6.500a2 2 0 0 0-2-2h-15a2 2 0 0 0-2 2v15a2 2 0 0 0 2 2h6" fill="none" stroke="#6e6e6e" stroke-width="1.300"/><path d="M22.500 7.500l-9 9.500-2.500-1.500z" fill="#6e6e6e"/><path d="M10.500 15.500c-2.500 0-2 4-5 4.500 3 1.500 7 .5 7.500-2.500z" fill="#6e6e6e"/></svg>
<div class="t" style="left:912.0px;top:88.10px;font-size:9.4px;color:#6a6a6a;transform:scaleX(0.936);">Quick</div>
<div class="t" style="left:908.0px;top:100.10px;font-size:9.4px;color:#6a6a6a;transform:scaleX(0.879);">Styles</div>
<svg style="left:931.5px;top:101px" width="8" height="8"><path d="M2.2 3.1 L4 4.9 L5.8 3.1" fill="none" stroke="#5a5a5a" stroke-width="1"/></svg>
<svg style="left:944.5px;top:62.5px" width="14" height="13"><path d="M5 6l4-4.500 3.500 3-4 4.500z" fill="none" stroke="#8a8a8a" stroke-width="1"/><path d="M4 7.500c-1 1.200-1 2 0 2" stroke="#8a8a8a" fill="none"/><rect x="0.500" y="10.500" width="12.500" height="2.500" fill="#707070"/></svg>
<div class="t" style="left:960.8px;top:65.10px;font-size:9.4px;color:#6a6a6a;transform:scaleX(0.866);">Shape Fill</div>
<svg style="left:998px;top:65.5px" width="8" height="8"><path d="M2.2 3.1 L4 4.9 L5.8 3.1" fill="none" stroke="#5a5a5a" stroke-width="1"/></svg>
<svg style="left:944.5px;top:81px" width="14" height="13"><path d="M4 7.500l5.500-6 2.500 2-5.500 6-3 1z" fill="none" stroke="#8a8a8a" stroke-width="1"/><path d="M0.500 1.500h7M0.500 1.500v8" stroke="#8a8a8a" fill="none"/><rect x="0.500" y="11" width="12.500" height="2" fill="#707070"/></svg>
<div class="t" style="left:960.8px;top:84.10px;font-size:9.4px;color:#6a6a6a;transform:scaleX(0.910);">Shape Outline</div>
<svg style="left:1016px;top:84px" width="8" height="8"><path d="M2.2 3.1 L4 4.9 L5.8 3.1" fill="none" stroke="#5a5a5a" stroke-width="1"/></svg>
<svg style="left:944.5px;top:100px" width="14" height="12"><path d="M1 6.500l5-5h6.500l-5 5z" fill="#cfcfcf"/><path d="M1 6.500h6.500l5-5v3.500l-5 5.500h-6.500z" fill="#8a8a8a"/></svg>
<div class="t" style="left:960.0px;top:102.10px;font-size:9.4px;color:#6a6a6a;transform:scaleX(0.891);">Shape Effects</div>
<svg style="left:1013px;top:102.5px" width="8" height="8"><path d="M2.2 3.1 L4 4.9 L5.8 3.1" fill="none" stroke="#5a5a5a" stroke-width="1"/></svg>
<div class="t" style="left:863.0px;top:118.10px;font-size:9.4px;color:#f2f2f2;transform:scaleX(0.856);">Drawing</div>
<svg style="left:1027px;top:120px" width="7" height="7"><path d="M0.5 4V0.5H4 M6.5 3V6.5H3 M2.5 2.5L6 6" fill="none" stroke="#6a6a6a" stroke-width="1"/></svg>
<div class="a" style="left:1034.5px;top:62px;width:1px;height:63px;background:#454545;"></div>
<!-- ===== ribbon: Editing ===== -->
<svg style="left:1043.5px;top:62.5px" width="13" height="13"><circle cx="8" cy="4.800" r="3.800" fill="none" stroke="#d8d8d8" stroke-width="1.100"/><path d="M5.200 7.600l-4.500 4.700" stroke="#d8d8d8" stroke-width="1.300"/></svg>
<div class="t" style="left:1058.8px;top:65.10px;font-size:9.4px;color:#f2f2f2;transform:scaleX(0.892);">Find and Replace</div>
<svg style="left:1043px;top:81px" width="14" height="13"><path d="M4.500 12l3.500-9.500 3.500 9.500M5.800 8.500h4.400" fill="none" stroke="#d8d8d8" stroke-width="1"/><path d="M10 1l1.500 4 1.500-4" fill="none" stroke="#d8d8d8" stroke-width=".8" transform="translate(0,6.500) scale(1,-1) translate(0,-1)"/><path d="M3.500 3.500a3.500 3.500 0 0 0-1 6" fill="none" stroke="#3a96dd" stroke-width="1.200"/><path d="M1 8.500l1.800 1.800 1.200-2.300z" fill="#3a96dd"/></svg>
<div class="t" style="left:1058.8px;top:84.10px;font-size:9.4px;color:#f2f2f2;transform:scaleX(0.878);">Replace Fonts</div>
<svg style="left:1045px;top:100px" width="10" height="13"><path d="M1 0.800v9.500l2.700-2.300 1.800 4 1.500-.7-1.800-3.900 3.300-.2z" fill="none" stroke="#d8d8d8" stroke-width="1"/></svg>
<div class="t" style="left:1058.8px;top:102.10px;font-size:9.4px;color:#f2f2f2;transform:scaleX(0.907);">Select</div>
<svg style="left:1083.5px;top:102.5px" width="8" height="8"><path d="M2 3.0 L4 5.0 L6 3.0" fill="none" stroke="#d0d0d0" stroke-width="1.1"/></svg>
<div class="t" style="left:1074.5px;top:118.10px;font-size:9.4px;color:#f2f2f2;transform:scaleX(0.852);">Editing</div>
<div class="a" style="left:1138px;top:62px;width:1px;height:63px;background:#454545;"></div>
<!-- ===== ribbon: Voice / Sensitivity / Add-ins / Designer ===== -->
<svg style="left:1152px;top:61.5px" width="17" height="24"><rect x="3.500" y="0.500" width="10" height="15.500" rx="5" fill="#2b7cd3"/><path d="M1.300 11.500a7.200 7.200 0 0 0 14.400 0" fill="none" stroke="#b8b8b8" stroke-width="1.200"/><path d="M8.500 18.700v4" stroke="#b8b8b8" stroke-width="1.200"/></svg>
<div class="t" style="left:1147.0px;top:90.10px;font-size:9.4px;color:#f2f2f2;transform:scaleX(0.940);">Dictate</div>
<svg style="left:1156.5px;top:101.5px" width="8" height="8"><path d="M2 3.0 L4 5.0 L6 3.0" fill="none" stroke="#d0d0d0" stroke-width="1.1"/></svg>
<div class="t" style="left:1150.8px;top:118.10px;font-size:9.4px;color:#f2f2f2;transform:scaleX(0.857);">Voice</div>
<div class="a" style="left:1182.5px;top:62px;width:1px;height:63px;background:#454545;"></div>
<svg style="left:1199.5px;top:62px" width="24" height="23"><path d="M14 4.500h-10.500v17h12.500v-10" fill="none" stroke="#6e6e6e" stroke-width="1.200"/><g transform="rotate(-40 15 8)"><rect x="11.500" y="5" width="8" height="8" fill="none" stroke="#6e6e6e" stroke-width="1.200"/><rect x="13.500" y="1" width="4" height="4" fill="none" stroke="#6e6e6e" stroke-width="1.200"/><path d="M15.500 13v5" stroke="#6e6e6e" stroke-width="1.500"/></g></svg>
<div class="t" style="left:1191.8px;top:88.10px;font-size:9.4px;color:#6a6a6a;transform:scaleX(0.891);">Sensitivity</div>
<svg style="left:1206.5px;top:100px" width="8" height="8"><path d="M2.2 3.1 L4 4.9 L5.8 3.1" fill="none" stroke="#5a5a5a" stroke-width="1"/></svg>
<div class="t" style="left:1193.0px;top:118.10px;font-size:9.4px;color:#f2f2f2;transform:scaleX(0.827);">Sensitivity</div>
<div class="a" style="left:1238px;top:62px;width:1px;height:63px;background:#454545;"></div>
<svg style="left:1251px;top:63px" width="22" height="21"><rect x="0.700" y="0.700" width="20.600" height="19.600" fill="#3a1c12" stroke="#c8532b" stroke-width="1.400"/><rect x="3.500" y="3.500" width="6" height="5.500" fill="none" stroke="#c8532b" stroke-width="1.300"/><rect x="12.500" y="3.500" width="6" height="5.500" fill="none" stroke="#c8532b" stroke-width="1.300"/><rect x="3.500" y="12" width="6" height="5.500" fill="none" stroke="#c8532b" stroke-width="1.300"/><rect x="12.500" y="12" width="6" height="5.500" fill="none" stroke="#c8532b" stroke-width="1.300"/></svg>
<div class="t" style="left:1246.8px;top:88.10px;font-size:9.4px;color:#f2f2f2;transform:scaleX(0.941);">Add-ins</div>
<div class="t" style="left:1248.0px;top:118.10px;font-size:9.4px;color:#f2f2f2;transform:scaleX(0.847);">Add-ins</div>
<div class="a" style="left:1284.5px;top:62px;width:1px;height:63px;background:#454545;"></div>
<svg style="left:1298px;top:61px" width="25" height="24"><rect x="5" y="7" width="18" height="14" fill="none" stroke="#9a9a9a" stroke-width="1.800"/><path d="M15 11.500h8M15 11.500v9" stroke="#9a9a9a" stroke-width="1.600"/><path d="M6.500 0l-5 9h3.500l-2.500 7 7.500-10h-4l3.500-6z" fill="#f2a33a"/></svg>
<div class="t" style="left:1293.7px;top:88.10px;font-size:9.4px;color:#f2f2f2;transform:scaleX(0.912);">Designer</div>
<div class="a" style="left:1335.5px;top:62px;width:1px;height:63px;background:#454545;"></div>
<div class="a" style="left:1356px;top:62px;width:23px;height:23px;border-radius:50%;background:#fff;border:2.500px solid #e8601c"></div>
<div class="t" style="left:1363.0px;top:67.10px;font-size:15px;color:#e8601c;font-weight:700;transform:scaleX(1.019);">J</div>
<div class="t" style="left:1344.4px;top:88.10px;font-size:9.4px;color:#f2f2f2;transform:scaleX(0.883);">Jasperactive</div>
<div class="t" style="left:1349.6px;top:100.10px;font-size:9.4px;color:#f2f2f2;transform:scaleX(0.959);">for Office</div>
<div class="t" style="left:1345.4px;top:118.10px;font-size:9.4px;color:#f2f2f2;transform:scaleX(0.805);">CCI Learning</div>
<div class="a" style="left:1399.5px;top:62px;width:1px;height:63px;background:#454545;"></div>
<div class="a" style="left:1420px;top:61.500px;width:24.500px;height:24px;border-radius:3px;background:#fff"></div>
<div class="t" style="left:1425.0px;top:72.10px;font-size:5.5px;color:#3a3acc;font-weight:700;font-style:italic;transform:scaleX(1.002);">XPED</div>
<div class="t" style="left:1408.0px;top:88.10px;font-size:9.4px;color:#f2f2f2;transform:scaleX(0.885);">XperienceED</div>
<div class="t" style="left:1410.0px;top:118.10px;font-size:9.4px;color:#f2f2f2;transform:scaleX(0.812);">CCI Learning</div>
<div class="a" style="left:1465px;top:62px;width:1px;height:63px;background:#454545;"></div>
<svg style="left:1585.5px;top:116.5px" width="8" height="8"><path d="M0.7999999999999998 2.4 L4 5.6 L7.2 2.4" fill="none" stroke="#e0e0e0" stroke-width="1.2"/></svg>
<!-- ===== slide thumbnails ===== -->
<div class="a" style="left:0;top:130px;width:226px;height:721px;overflow:hidden">
<div class="a" style="left:26px;top:-57px;width:188px;height:106px;background:#fff;border-radius:3px"></div>
<div class="t" style="left:51.5px;top:4.10px;font-size:4.1px;color:#3a3040;transform:scaleX(1.030);-webkit-text-stroke:0;">Press x, y, or z</div>
<div class="t" style="left:51.5px;top:9.10px;font-size:4.1px;color:#151515;font-weight:700;transform:scaleX(1.030);-webkit-text-stroke:0;">after pressing g</div>
<div class="t" style="left:51.5px;top:14.10px;font-size:4.1px;color:#3a3040;transform:scaleX(1.030);-webkit-text-stroke:0;">to move object</div>
<div class="t" style="left:51.5px;top:20.10px;font-size:4.1px;color:#3a3040;transform:scaleX(1.030);-webkit-text-stroke:0;">along specific</div>
<div class="t" style="left:51.5px;top:25.10px;font-size:4.1px;color:#151515;font-weight:700;transform:scaleX(1.030);-webkit-text-stroke:0;">axis</div>
<div class="t" style="left:47.5px;top:3.10px;font-size:4px;color:#802020;transform:scaleX(1.071);-webkit-text-stroke:0;">•</div>
<div class="t" style="left:110.0px;top:-0.90px;font-size:4.1px;color:#3a3040;transform:scaleX(1.030);-webkit-text-stroke:0;">Press x, y, or z</div>
<div class="t" style="left:110.0px;top:4.10px;font-size:4.1px;color:#3a3040;transform:scaleX(1.030);-webkit-text-stroke:0;">after pressing r</div>
<div class="t" style="left:110.0px;top:9.10px;font-size:4.1px;color:#151515;font-weight:700;transform:scaleX(1.030);-webkit-text-stroke:0;">to rotate object</div>
<div class="t" style="left:110.0px;top:14.10px;font-size:4.1px;color:#3a3040;transform:scaleX(1.030);-webkit-text-stroke:0;">along specific</div>
<div class="t" style="left:110.0px;top:19.10px;font-size:4.1px;color:#3a3040;transform:scaleX(1.030);-webkit-text-stroke:0;">axis</div>
<div class="t" style="left:164.5px;top:4.10px;font-size:4.1px;color:#3a3040;transform:scaleX(1.030);-webkit-text-stroke:0;">Press x, y, or z</div>
<div class="t" style="left:164.5px;top:9.10px;font-size:4.1px;color:#151515;font-weight:700;transform:scaleX(1.030);-webkit-text-stroke:0;">after pressing s</div>
<div class="t" style="left:164.5px;top:14.10px;font-size:4.1px;color:#3a3040;transform:scaleX(1.030);-webkit-text-stroke:0;">to scale object</div>
<div class="t" style="left:164.5px;top:20.10px;font-size:4.1px;color:#3a3040;transform:scaleX(1.030);-webkit-text-stroke:0;">along specific</div>
<div class="t" style="left:164.5px;top:25.10px;font-size:4.1px;color:#151515;font-weight:700;transform:scaleX(1.030);-webkit-text-stroke:0;">axis</div>
<div class="t" style="left:160.5px;top:3.10px;font-size:4px;color:#802020;transform:scaleX(1.071);-webkit-text-stroke:0;">•</div>
<div class="t" style="left:9.0px;top:64.10px;font-size:10px;color:#e8e8e8;transform:scaleX(0.989);">4</div>
<div class="a" style="left:26px;top:64.4px;width:188px;height:106px;background:#fff;border-radius:3px"></div>
<div class="t" style="left:40.7px;top:77.10px;font-size:7.4px;color:#161616;transform:scaleX(1.053);-webkit-text-stroke:0;">Materials Recap</div>
<div class="t" style="left:44.0px;top:94.10px;font-size:5px;color:#3a3a48;transform:scaleX(1.063);-webkit-text-stroke:0;">Go to</div>
<div class="t" style="left:44.0px;top:100.10px;font-size:5px;color:#3a3a48;transform:scaleX(1.112);-webkit-text-stroke:0;">bottom</div>
<div class="t" style="left:44.0px;top:106.10px;font-size:5px;color:#3a3a48;transform:scaleX(0.905);-webkit-text-stroke:0;">right</div>
<div class="t" style="left:44.0px;top:112.10px;font-size:5px;color:#3a3a48;transform:scaleX(1.094);-webkit-text-stroke:0;">corner</div>
<div class="t" style="left:44.0px;top:118.10px;font-size:5px;color:#3a3a48;transform:scaleX(1.112);-webkit-text-stroke:0;">toolbar</div>
<div class="t" style="left:40.3px;top:95.10px;font-size:4.5px;color:#a03030;transform:scaleX(0.952);-webkit-text-stroke:0;">•</div>
<div class="t" style="left:135.0px;top:94.10px;font-size:5px;color:#2e2e3c;transform:scaleX(1.050);-webkit-text-stroke:0;">Go to top</div>
<div class="t" style="left:135.0px;top:100.10px;font-size:5px;color:#2e2e3c;transform:scaleX(0.874);-webkit-text-stroke:0;">right</div>
<div class="t" style="left:135.0px;top:106.10px;font-size:5px;color:#2e2e3c;transform:scaleX(1.101);-webkit-text-stroke:0;">corner</div>
<div class="t" style="left:135.0px;top:112.10px;font-size:5px;color:#2e2e3c;transform:scaleX(1.019);-webkit-text-stroke:0;">and</div>
<div class="t" style="left:135.0px;top:118.10px;font-size:5px;color:#2e2e3c;transform:scaleX(1.049);-webkit-text-stroke:0;">change</div>
<div class="t" style="left:135.0px;top:124.10px;font-size:5px;color:#2e2e3c;transform:scaleX(1.079);-webkit-text-stroke:0;">to</div>
<div class="t" style="left:135.0px;top:130.10px;font-size:5px;color:#2e2e3c;transform:scaleX(1.085);-webkit-text-stroke:0;">viewport</div>
<div class="t" style="left:135.0px;top:136.10px;font-size:5px;color:#2e2e3c;transform:scaleX(1.062);-webkit-text-stroke:0;">shading</div>
<div class="t" style="left:135.0px;top:142.10px;font-size:5px;color:#2e2e3c;transform:scaleX(0.808);-webkit-text-stroke:0;">to see</div>
<div class="t" style="left:135.0px;top:148.10px;font-size:5px;color:#2e2e3c;transform:scaleX(1.087);-webkit-text-stroke:0;">colors</div>
<div class="t" style="left:131.5px;top:95.10px;font-size:4.5px;color:#303030;transform:scaleX(0.952);-webkit-text-stroke:0;">•</div>
<div class="a" style="left:90.3px;top:81.00px;width:39.8px;height:77.8px;background:#3b3b3b;border:0.7px solid #0c0c0c;"></div>
<div class="a" style="left:99.5px;top:87.20px;width:27px;height:2px;background:#4772b3;"></div>
<div class="a" style="left:91px;top:83.20px;width:37px;height:1px;background:#5a5a5a;"></div>
<div class="a" style="left:93px;top:95.50px;width:35px;height:1.2px;background:#2c2c2c;"></div>
<div class="a" style="left:110px;top:107.70px;width:17.5px;height:2px;background:#d8202c;"></div>
<div class="a" style="left:110px;top:104.60px;width:9px;height:1.6px;background:#4f4f4f;"></div>
<div class="a" style="left:110px;top:110.80px;width:10px;height:1.6px;background:#4772b3;"></div>
<div class="a" style="left:110px;top:113.90px;width:8px;height:1.6px;background:#4772b3;"></div>
<div class="a" style="left:110px;top:117.00px;width:17px;height:1.6px;background:#4772b3;"></div>
<div class="a" style="left:110px;top:120.10px;width:5px;height:1.6px;background:#555;"></div>
<div class="a" style="left:96px;top:124.00px;width:3px;height:1px;background:#8a8a8a;"></div>
<div class="a" style="left:96px;top:126.60px;width:5px;height:1px;background:#8a8a8a;"></div>
<div class="a" style="left:96px;top:129.20px;width:7px;height:1px;background:#8a8a8a;"></div>
<div class="a" style="left:96px;top:131.80px;width:4px;height:1px;background:#8a8a8a;"></div>
<div class="a" style="left:96px;top:134.40px;width:6px;height:1px;background:#8a8a8a;"></div>
<div class="a" style="left:96px;top:137.00px;width:3px;height:1px;background:#8a8a8a;"></div>
<div class="a" style="left:96px;top:139.60px;width:5px;height:1px;background:#8a8a8a;"></div>
<div class="a" style="left:96px;top:142.20px;width:7px;height:1px;background:#8a8a8a;"></div>
<div class="a" style="left:96px;top:144.80px;width:4px;height:1px;background:#8a8a8a;"></div>
<div class="a" style="left:96px;top:147.40px;width:6px;height:1px;background:#8a8a8a;"></div>
<div class="a" style="left:96px;top:150.00px;width:3px;height:1px;background:#8a8a8a;"></div>
<div class="a" style="left:96px;top:152.60px;width:5px;height:1px;background:#8a8a8a;"></div>
<div class="a" style="left:100px;top:154.50px;width:28px;height:1.6px;background:#555;"></div>
<div class="a" style="left:159.7px;top:90.70px;width:41px;height:19.8px;background:#383838;border:0.7px solid #0c0c0c;"></div>
<div class="a" style="left:182.5px;top:93.50px;width:9.5px;height:9px;background:#3f6fc4;"></div>
<svg style="left:160px;top:90.69999999999999px" width="41" height="20"><circle cx="6.300" cy="7.800" r="3" fill="none" stroke="#a0a0a0" stroke-width=".7"/><path d="M3.300 7.800h6M6.300 4.800v6" stroke="#a0a0a0" stroke-width=".5"/><circle cx="15.300" cy="7.800" r="3.300" fill="#a8a8a8"/><circle cx="27" cy="7.800" r="3.300" fill="#e6e6e6"/><path d="M27 4.500a3.300 3.300 0 0 0 0 6.600c-1.500-1-1.500-5.600 0-6.600z" fill="#3f6fc4"/><circle cx="36" cy="7.800" r="3.100" fill="none" stroke="#a0a0a0" stroke-width=".8"/><circle cx="36.800" cy="7" r="1.800" fill="#a0a0a0"/><rect x="1.500" y="15" width="12" height="3" rx="1" fill="#4a4a4a"/></svg>
<svg style="left:170px;top:78px" width="25" height="20"><path d="M5 17c1-8 4-14 8-13.500s5 8 4.500 13" fill="none" stroke="#e03030" stroke-width=".6"/><path d="M16 14.500l1.500 2.500 1.500-3" fill="none" stroke="#e03030" stroke-width=".6"/></svg>
<svg style="left:60px;top:105px" width="32" height="22"><path d="M1 1c8 4 16 9 28 19" fill="none" stroke="#e03030" stroke-width=".6"/></svg>
<div class="t" style="left:9.0px;top:185.10px;font-size:10px;color:#e8e8e8;transform:scaleX(0.989);">5</div>
<div class="a" style="left:26px;top:185.8px;width:188px;height:106px;background:#fff;border-radius:3px"></div>
<div class="t" style="left:40.3px;top:198.10px;font-size:8.1px;color:#161616;transform:scaleX(0.997);-webkit-text-stroke:0;">Shortcut list</div>
<div class="a" style="left:44px;top:214.82px;width:26px;height:0.9px;background:#9a8888;"></div>
<div class="a" style="left:40.5px;top:214.92px;width:1px;height:0.7px;background:#c8c8c8;"></div>
<div class="a" style="left:44px;top:218.01px;width:31px;height:0.9px;background:#c2c6cc;"></div>
<div class="a" style="left:40.5px;top:218.11px;width:1px;height:0.7px;background:#c8c8c8;"></div>
<div class="a" style="left:44px;top:221.20px;width:30px;height:0.9px;background:#c2c6cc;"></div>
<div class="a" style="left:40.5px;top:221.30px;width:1px;height:0.7px;background:#c8c8c8;"></div>
<div class="a" style="left:44px;top:224.52px;width:13px;height:0.9px;background:#c2c6cc;"></div>
<div class="a" style="left:40.5px;top:224.62px;width:1px;height:0.7px;background:#c8c8c8;"></div>
<div class="a" style="left:44px;top:227.71px;width:9px;height:0.9px;background:#c2c6cc;"></div>
<div class="a" style="left:40.5px;top:227.81px;width:1px;height:0.7px;background:#c8c8c8;"></div>
<div class="a" style="left:44px;top:230.90px;width:12px;height:0.9px;background:#c2c6cc;"></div>
<div class="a" style="left:40.5px;top:231.00px;width:1px;height:0.7px;background:#c8c8c8;"></div>
<div class="a" style="left:44px;top:234.89px;width:9px;height:0.9px;background:#c2c6cc;"></div>
<div class="a" style="left:40.5px;top:234.99px;width:1px;height:0.7px;background:#c8c8c8;"></div>
<div class="a" style="left:44px;top:237.95px;width:5px;height:0.9px;background:#c2c6cc;"></div>
<div class="a" style="left:40.5px;top:238.05px;width:1px;height:0.7px;background:#c8c8c8;"></div>
<div class="a" style="left:44px;top:241.14px;width:20px;height:0.9px;background:#c2c6cc;"></div>
<div class="a" style="left:40.5px;top:241.24px;width:1px;height:0.7px;background:#c8c8c8;"></div>
<div class="a" style="left:44px;top:244.06px;width:39px;height:0.9px;background:#c2c6cc;"></div>
<div class="a" style="left:40.5px;top:244.16px;width:1px;height:0.7px;background:#c8c8c8;"></div>
<div class="a" style="left:44px;top:248.71px;width:5px;height:0.9px;background:#c2c6cc;"></div>
<div class="a" style="left:40.5px;top:248.81px;width:1px;height:0.7px;background:#c8c8c8;"></div>
<div class="a" style="left:44px;top:251.90px;width:19px;height:0.9px;background:#9a8888;"></div>
<div class="a" style="left:40.5px;top:252.00px;width:1px;height:0.7px;background:#c8c8c8;"></div>
<div class="a" style="left:44px;top:254.96px;width:38px;height:0.9px;background:#c2c6cc;"></div>
<div class="a" style="left:40.5px;top:255.06px;width:1px;height:0.7px;background:#c8c8c8;"></div>
<div class="a" style="left:44px;top:259.08px;width:4px;height:0.9px;background:#c2c6cc;"></div>
<div class="a" style="left:40.5px;top:259.18px;width:1px;height:0.7px;background:#c8c8c8;"></div>
<div class="a" style="left:44px;top:262.00px;width:19px;height:0.9px;background:#c2c6cc;"></div>
<div class="a" style="left:40.5px;top:262.10px;width:1px;height:0.7px;background:#c8c8c8;"></div>
<div class="a" style="left:44px;top:265.46px;width:38px;height:0.9px;background:#c2c6cc;"></div>
<div class="a" style="left:40.5px;top:265.56px;width:1px;height:0.7px;background:#c8c8c8;"></div>
<div class="a" style="left:44px;top:269.98px;width:12px;height:0.9px;background:#9a8888;"></div>
<div class="a" style="left:40.5px;top:270.08px;width:1px;height:0.7px;background:#c8c8c8;"></div>
<div class="a" style="left:44px;top:272.90px;width:14px;height:0.9px;background:#9a8888;"></div>
<div class="a" style="left:40.5px;top:273.00px;width:1px;height:0.7px;background:#c8c8c8;"></div>
<div class="t" style="left:9.0px;top:306.10px;font-size:10px;color:#e8e8e8;transform:scaleX(0.989);">6</div>
<div class="a" style="left:23.700px;top:304.5px;width:193.300px;height:111px;background:#f5b9a3;border-radius:5px"></div>
<div class="a" style="left:26.500px;top:307.3px;width:187.600px;height:105.800px;background:#fff;border-radius:3px"></div>
<div class="t" style="left:47.3px;top:328.10px;font-size:8.6px;color:#121212;transform:scaleX(0.892);-webkit-text-stroke:0;">Finish your</div>
<div class="t" style="left:40.3px;top:337.10px;font-size:8.6px;color:#121212;transform:scaleX(0.896);-webkit-text-stroke:0;">Project: Create</div>
<div class="t" style="left:45.0px;top:347.10px;font-size:8.6px;color:#121212;transform:scaleX(0.915);-webkit-text-stroke:0;">an Obstacle</div>
<div class="t" style="left:53.6px;top:356.10px;font-size:8.6px;color:#121212;transform:scaleX(0.891);-webkit-text-stroke:0;">Course</div>
<div class="t" style="left:46.8px;top:372.10px;font-size:3.3px;color:#444;transform:scaleX(0.980);-webkit-text-stroke:0;">Create a platformer course</div>
<div class="t" style="left:45.9px;top:376.10px;font-size:3.3px;color:#444;transform:scaleX(0.980);-webkit-text-stroke:0;">with multiple shapes (refrain</div>
<div class="t" style="left:47.8px;top:380.10px;font-size:3.3px;color:#444;transform:scaleX(0.980);-webkit-text-stroke:0;">from using MetaBalls yet)</div>
<svg style="left:111px;top:327px" width="88" height="65.900" viewBox="0 0 438 328"><defs><linearGradient id="tcy" x1="0" x2="1" y1="0" y2="0"><stop offset="0" stop-color="#7d7d7d"/><stop offset=".45" stop-color="#a2a2a2"/><stop offset="1" stop-color="#858585"/></linearGradient><linearGradient id="ttb" x1="0" x2="0.35" y1="0" y2="1"><stop offset="0" stop-color="#b4b4b4"/><stop offset=".5" stop-color="#a2a2a2"/><stop offset="1" stop-color="#7c7c7c"/></linearGradient><radialGradient id="thd" cx=".45" cy=".35" r=".7"><stop offset="0" stop-color="#c8c8c8"/><stop offset=".55" stop-color="#a2a2a2"/><stop offset="1" stop-color="#707070"/></radialGradient><linearGradient id="tfw" x1="0" x2="1" y1="0" y2="1"><stop offset="0" stop-color="#838383"/><stop offset="1" stop-color="#8b8b8b"/></linearGradient><clipPath id="tcl"><rect x="0" y="0" width="438" height="328"/></clipPath></defs><g clip-path="url(#tcl)"><rect x="0" y="0" width="438" height="328" fill="#3c3c3c"/><path d="M-104.5 -2L40.5 332M-74.3 -2L124.2 332M-44.0 -2L207.8 332M-13.7 -2L291.5 332M46.9 -2L458.7 332M77.2 -2L542.4 332M107.5 -2L626.0 332M137.8 -2L709.6 332M168.0 -2L793.3 332M198.3 -2L876.9 332M228.6 -2L960.6 332M258.9 -2L1044.2 332M289.2 -2L1127.8 332M319.5 -2L1211.5 332M349.8 -2L1295.1 332M380.0 -2L1378.8 332M410.3 -2L1462.4 332M440.6 -2L1546.0 332M-3 0.4L441 -64.0M-3 8.6L441 -58.6M-3 17.5L441 -52.6M-3 27.3L441 -46.1M-3 38.1L441 -39.0M-3 49.9L441 -31.1M-3 63.1L441 -22.4M-3 77.7L441 -12.6M-3 94.2L441 -1.7M-3 112.8L441 10.7M-3 134.0L441 24.7M-3 158.3L441 40.9M-3 186.6L441 59.7M-3 219.9L441 81.8M-3 307.8L441 140.2M-3 367.5L441 179.9M-3 443.4L441 230.3M-3 543.2L441 296.6" stroke="#545454" stroke-width=".8" fill="none"/><line x1="18.8" y1="0" x2="371" y2="328" stroke="#64902c" stroke-width="1"/><line x1="0" y1="258.6" x2="445" y2="106.9" stroke="#a8324a" stroke-width="1"/><polygon points="77.5,172.4 77.5,174.6 156.6,287.5 366.2,198.3 366.2,195.3 156.6,284.5" fill="#6e6e6e" /><polygon points="77.5,172.4 156.6,284.5 366.2,195.3 247.7,120.8" fill="#929292" /><g transform="rotate(32.5 290.9 147.9)"><rect x="245.9" y="132.4" width="90" height="31" rx="15.5" fill="url(#ttb)"/><ellipse cx="328.9" cy="147.9" rx="6.500" ry="14.500" fill="#7a7a7a"/><ellipse cx="329.9" cy="147.9" rx="5" ry="12.500" fill="#8e8e8e"/></g><ellipse cx="286.1" cy="149.0" rx="1.9" ry="1.9" fill="#e8902c" /><polygon points="144.9,110.3 244.7,85.8 242.8,148.7 191.2,161.1 146.0,173.5" fill="#686868" /><polygon points="200.6,133.6 213.0,131.3 214.9,139.6 202.5,141.9" fill="#a4a4a4" /><polygon points="220.2,119.7 230.7,117.4 232.6,125.3 222.4,127.6" fill="#a4a4a4" /><polygon points="187.4,147.2 191.2,145.7 200.6,155.4 198.0,157.7" fill="#9c9c9c" /><line x1="215.7" y1="156.2" x2="243.9" y2="102.7" stroke="#a0a0a0" stroke-width="1.1" /><line x1="225.8" y1="153.6" x2="251.4" y2="106.5" stroke="#a0a0a0" stroke-width="1.1" /><line x1="219.9" y1="148.2" x2="229.7" y2="146.5" stroke="#a8a8a8" stroke-width="1" /><line x1="224.1" y1="140.2" x2="233.5" y2="139.4" stroke="#a8a8a8" stroke-width="1" /><line x1="228.4" y1="132.1" x2="237.4" y2="132.4" stroke="#a8a8a8" stroke-width="1" /><line x1="232.6" y1="124.1" x2="241.2" y2="125.3" stroke="#a8a8a8" stroke-width="1" /><line x1="236.8" y1="116.1" x2="245.0" y2="118.3" stroke="#a8a8a8" stroke-width="1" /><line x1="241.1" y1="108.1" x2="248.9" y2="111.2" stroke="#a8a8a8" stroke-width="1" /><polygon points="261.6,106.5 276.6,106.5 269.1,189.3 253.7,189.3" fill="url(#tcy)" /><ellipse cx="261.4" cy="189.3" rx="7.7" ry="3.4" fill="#8a8a8a" /><ellipse cx="269.5" cy="106.5" rx="26.7" ry="9.4" fill="#858585" /><ellipse cx="269.5" cy="104.3" rx="26.7" ry="9.4" fill="#a8a8a8" /><polygon points="261.2,89.6 277.8,89.6 277.8,100.9 261.2,100.9" fill="url(#tcy)" /><ellipse cx="269.5" cy="100.9" rx="8.3" ry="3.0" fill="#909090" /><polygon points="247.7,66.8 257.9,52.7 262.3,55.3 264.5,57.5 271.2,48.8 276.5,52.7 267.2,62.9 259.2,76.2 250.8,73.1" fill="#a6a6a6" stroke="#a6a6a6" stroke-width="1.500" stroke-linejoin="round"/><polygon points="299.5,67.7 310.6,64.6 313.7,68.4 308.4,75.3 300.9,76.3" fill="#a2a2a2" stroke="#a2a2a2" stroke-width="1.500" stroke-linejoin="round"/><polygon points="300.9,76.3 308.4,75.3 313.7,68.4 312.8,72.6 307.9,78.8 300.0,79.7" fill="#7e7670"/><ellipse cx="278.2" cy="71.3" rx="21.800" ry="19.200" fill="url(#thd)"/><ellipse cx="257.9" cy="86.3" rx="4.300" ry="7" fill="#8e8e8e" transform="rotate(32 257.9 86.3)"/><ellipse cx="258.5" cy="85.0" rx="3.600" ry="6" fill="#a4a4a4" transform="rotate(32 258.5 85.0)"/><polygon points="144.9,110.3 223.2,180.7 220.2,252.2 146.0,173.5" fill="url(#tfw)" /><line x1="144.9" y1="110.3" x2="223.2" y2="180.7" stroke="#a6a6a6" stroke-width="0.8" /><polygon points="220.2,179.5 223.6,181.4 220.9,252.5 217.9,249.9" fill="#9a9a9a" /><polygon points="102.0,129.8 112.9,127.6 115.2,174.3 106.9,176.9" fill="#7c7c7c" /><polygon points="92.6,126.1 116.7,120.8 125.3,128.0 100.1,132.9" fill="#939393" /><polygon points="110.3,113.3 123.5,110.3 129.1,115.9 115.2,119.3" fill="#929292" /><line x1="109.5" y1="85.8" x2="107.7" y2="121.6" stroke="#a0a0a0" stroke-width="0.9" /><line x1="109.5" y1="85.8" x2="117.8" y2="129.8" stroke="#a0a0a0" stroke-width="0.9" /><line x1="115.2" y1="88.4" x2="115.2" y2="113.3" stroke="#a0a0a0" stroke-width="0.9" /><line x1="122.7" y1="90.7" x2="124.2" y2="114.0" stroke="#a0a0a0" stroke-width="0.9" /><ellipse cx="118.6" cy="91.5" rx="3.8" ry="5.3" fill="none" stroke="#bdbdbd" stroke-width="1.400"/><line x1="124.2" y1="89.6" x2="193.1" y2="98.2" stroke="#9c9c9c" stroke-width="0.8" /><line x1="124.2" y1="90.7" x2="183.7" y2="99.7" stroke="#9c9c9c" stroke-width="0.7" /><polygon points="114.4,149.8 119.7,161.1 127.2,170.5 137.8,178.0 137.0,190.1 115.9,195.0" fill="#7a7a7a" /><path d="M114.4,148.7 L131.0,141.1 Q138.5,163.0 158.1,169.0 L137.8,177.3 Q119.7,168.6 114.4,148.7Z" fill="#9c9c9c"/><line x1="118.3" y1="159.5" x2="135.5" y2="151.7" stroke="#808080" stroke-width="0.6" /><line x1="122.7" y1="165.0" x2="140.6" y2="157.1" stroke="#808080" stroke-width="0.6" /><line x1="127.8" y1="169.8" x2="146.5" y2="161.7" stroke="#808080" stroke-width="0.6" /><line x1="132.5" y1="173.6" x2="151.9" y2="165.4" stroke="#808080" stroke-width="0.6" /><line x1="140.4" y1="176.9" x2="161.9" y2="263.8" stroke="#7c7c7c" stroke-width="1.7" /><line x1="153.6" y1="172.7" x2="175.4" y2="253.3" stroke="#7c7c7c" stroke-width="1.7" /><line x1="143.0" y1="187.3" x2="156.2" y2="182.4" stroke="#848484" stroke-width="1.3" /><line x1="146.2" y1="200.4" x2="159.5" y2="194.5" stroke="#848484" stroke-width="1.3" /><line x1="149.4" y1="213.4" x2="162.7" y2="206.6" stroke="#848484" stroke-width="1.3" /><line x1="152.6" y1="226.4" x2="166.0" y2="218.7" stroke="#848484" stroke-width="1.3" /><line x1="155.8" y1="239.5" x2="169.3" y2="230.7" stroke="#848484" stroke-width="1.3" /><line x1="159.1" y1="252.5" x2="172.6" y2="242.8" stroke="#848484" stroke-width="1.3" /><line x1="161.1" y1="223.2" x2="161.1" y2="265.3" stroke="#808080" stroke-width="2.4" /><line x1="191.6" y1="217.5" x2="191.6" y2="254.0" stroke="#808080" stroke-width="2.4" /><line x1="178.8" y1="211.9" x2="178.8" y2="219.4" stroke="#808080" stroke-width="2.4" /><ellipse cx="185.6" cy="207.5" rx="3.7" ry="3.3" fill="#8a8a8a" /><ellipse cx="185.1" cy="207.9" rx="2.1" ry="1.8" fill="#6e6e6e" /><ellipse cx="201.7" cy="205.8" rx="3.3" ry="3.7" fill="#858585" /><ellipse cx="194.7" cy="212.8" rx="4.6" ry="4.6" fill="#8c8c8c" /><ellipse cx="193.8" cy="206.6" rx="8.3" ry="6.8" fill="url(#thd)" /><ellipse cx="191.4" cy="207.6" rx="1.7" ry="1.7" fill="#787878" /><ellipse cx="197.0" cy="208.3" rx="1.7" ry="1.7" fill="#787878" /><ellipse cx="191.4" cy="207.6" rx="0.7" ry="0.7" fill="#c0c0c0" /><ellipse cx="197.0" cy="208.3" rx="0.7" ry="0.7" fill="#c0c0c0" /><ellipse cx="195.1" cy="214.5" rx="2.5" ry="1.7" fill="#a6a6a6" /><ellipse cx="167.9" cy="202.6" rx="4.1" ry="3.6" fill="#8a8a8a" /><ellipse cx="167.4" cy="203.1" rx="2.3" ry="2.0" fill="#6e6e6e" /><ellipse cx="185.5" cy="200.8" rx="3.6" ry="4.1" fill="#858585" /><ellipse cx="177.8" cy="208.5" rx="5.0" ry="5.0" fill="#8c8c8c" /><ellipse cx="176.9" cy="201.7" rx="9.0" ry="7.4" fill="url(#thd)" /><ellipse cx="174.2" cy="202.8" rx="1.8" ry="1.8" fill="#787878" /><ellipse cx="180.3" cy="203.5" rx="1.8" ry="1.8" fill="#787878" /><ellipse cx="174.2" cy="202.8" rx="0.7" ry="0.7" fill="#c0c0c0" /><ellipse cx="180.3" cy="203.5" rx="0.7" ry="0.7" fill="#c0c0c0" /><ellipse cx="178.3" cy="210.3" rx="2.7" ry="1.8" fill="#a6a6a6" /><ellipse cx="151.3" cy="218.5" rx="4.4" ry="3.9" fill="#8a8a8a" /><ellipse cx="150.8" cy="219.0" rx="2.4" ry="2.2" fill="#6e6e6e" /><ellipse cx="170.4" cy="216.6" rx="3.9" ry="4.4" fill="#858585" /><ellipse cx="162.1" cy="224.9" rx="5.4" ry="5.4" fill="#8c8c8c" /><ellipse cx="161.1" cy="217.5" rx="9.8" ry="8.0" fill="url(#thd)" /><ellipse cx="158.2" cy="218.7" rx="2.0" ry="2.0" fill="#787878" /><ellipse cx="164.8" cy="219.5" rx="2.0" ry="2.0" fill="#787878" /><ellipse cx="158.2" cy="218.7" rx="0.8" ry="0.8" fill="#c0c0c0" /><ellipse cx="164.8" cy="219.5" rx="0.8" ry="0.8" fill="#c0c0c0" /><ellipse cx="162.6" cy="226.8" rx="2.9" ry="2.0" fill="#a6a6a6" /><polygon points="168.6,261.6 176.2,246.5 183.7,261.6" fill="#a4a4a4" /><ellipse cx="176.2" cy="261.6" rx="7.5" ry="2.3" fill="#9a9a9a" /><ellipse cx="317.4" cy="188.6" rx="9.0" ry="5.0" fill="#747474" /><polygon points="303.4,178.7 310.2,179.6 308.9,184.1" fill="#a0a0a0" /><polygon points="323.3,181.9 329.2,185.5 323.8,186.8" fill="#8a8a8a" /><ellipse cx="316.5" cy="183.7" rx="9.0" ry="7.7" fill="url(#thd)" /><polygon points="319.7,190.0 323.3,189.1 325.1,196.8 322.9,196.3" fill="#9a9a9a" /><ellipse cx="314.7" cy="176.9" rx="2.7" ry="1.6" fill="#b4b4b4" /><ellipse cx="296.3" cy="199.7" rx="8.7" ry="4.8" fill="#747474" /><polygon points="282.9,190.2 289.4,191.1 288.1,195.4" fill="#a0a0a0" /><polygon points="302.0,193.2 307.6,196.7 302.4,198.0" fill="#8a8a8a" /><ellipse cx="295.5" cy="195.0" rx="8.7" ry="7.4" fill="url(#thd)" /><polygon points="298.5,201.0 302.0,200.1 303.7,207.5 301.5,207.1" fill="#9a9a9a" /><ellipse cx="293.7" cy="188.5" rx="2.6" ry="1.6" fill="#b4b4b4" /><ellipse cx="265.5" cy="213.1" rx="9.0" ry="5.0" fill="#747474" /><polygon points="251.5,203.2 258.3,204.1 256.9,208.6" fill="#a0a0a0" /><polygon points="271.4,206.3 277.2,209.9 271.8,211.3" fill="#8a8a8a" /><ellipse cx="264.6" cy="208.1" rx="9.0" ry="7.7" fill="url(#thd)" /><polygon points="267.8,214.5 271.4,213.5 273.2,221.2 270.9,220.8" fill="#9a9a9a" /><ellipse cx="262.8" cy="201.4" rx="2.7" ry="1.6" fill="#b4b4b4" /><ellipse cx="231.7" cy="225.7" rx="9.4" ry="5.2" fill="#747474" /><polygon points="217.1,215.4 224.1,216.3 222.7,221.0" fill="#a0a0a0" /><polygon points="237.8,218.7 243.9,222.4 238.3,223.8" fill="#8a8a8a" /><ellipse cx="230.7" cy="220.5" rx="9.4" ry="8.0" fill="url(#thd)" /><polygon points="234.0,227.1 237.8,226.2 239.7,234.2 237.3,233.7" fill="#9a9a9a" /><ellipse cx="228.8" cy="213.5" rx="2.8" ry="1.7" fill="#b4b4b4" /><ellipse cx="280.4" cy="175.4" rx="4.1" ry="4.1" fill="none" stroke="#f0f0f0" stroke-width="1.100"/><ellipse cx="280.4" cy="175.4" rx="4.1" ry="4.1" fill="none" stroke="#e03030" stroke-width="1.100" stroke-dasharray="1.600 1.600"/><line x1="274.0" y1="175.4" x2="286.8" y2="175.4" stroke="#2a2a2a" stroke-width="0.5" /><line x1="280.4" y1="169.0" x2="280.4" y2="181.8" stroke="#2a2a2a" stroke-width="0.5" /></g></svg>
<div class="t" style="left:9.0px;top:428.10px;font-size:10px;color:#e8e8e8;transform:scaleX(0.989);">7</div>
<div class="a" style="left:26px;top:428px;width:188px;height:106px;background:#fff;border-radius:3px"></div>
<div class="t" style="left:40.6px;top:441.10px;font-size:7.4px;color:#161616;transform:scaleX(1.032);-webkit-text-stroke:0;">Lesson 2 Edit Mode Recap</div>
<div class="t" style="left:54.2px;top:458.10px;font-size:4.3px;color:#111;font-weight:700;transform:scaleX(1.041);-webkit-text-stroke:0;">Select Modes</div>
<div class="a" style="left:53.6px;top:464.80px;width:29.4px;height:11px;background:#2e2e2e;"></div>
<div class="a" style="left:54.7px;top:465.80px;width:8.6px;height:9px;background:#4772b3;"></div>
<div class="a" style="left:65px;top:465.80px;width:8px;height:9px;background:#565656;"></div>
<div class="a" style="left:74px;top:465.80px;width:8px;height:9px;background:#565656;"></div>
<div class="a" style="left:56px;top:468.50px;width:3.5px;height:3.5px;background:#e8e8e8;"></div>
<div class="a" style="left:67.5px;top:468.00px;width:2.5px;height:5px;background:#d0d0d0;"></div>
<div class="a" style="left:75.5px;top:468.00px;width:4.5px;height:4.5px;background:#f0f0f0;"></div>
<svg style="left:45px;top:470px" width="42" height="14"><path d="M11.500 2c-3 1.500-6 4.500-8.500 8M23.500 2v8M33 2c2 1.500 3.500 4 4 7" fill="none" stroke="#e03030" stroke-width=".6"/></svg>
<div class="t" style="left:43.0px;top:482.10px;font-size:3.3px;color:#555;transform:scaleX(1.069);-webkit-text-stroke:0;">Vertex</div>
<div class="t" style="left:62.0px;top:482.10px;font-size:3.3px;color:#555;transform:scaleX(1.038);-webkit-text-stroke:0;">Edge</div>
<div class="t" style="left:77.0px;top:482.10px;font-size:3.3px;color:#555;transform:scaleX(1.090);-webkit-text-stroke:0;">Face</div>
<div class="t" style="left:100.0px;top:459.10px;font-size:3.8px;color:#333;transform:scaleX(0.902);-webkit-text-stroke:0;">•</div>
<div class="t" style="left:103.8px;top:458.10px;font-size:4px;color:#222;transform:scaleX(1.052);-webkit-text-stroke:0;">Extrude</div>
<div class="t" style="left:107.0px;top:465.10px;font-size:3.8px;color:#333;transform:scaleX(0.902);-webkit-text-stroke:0;">•</div>
<div class="t" style="left:110.5px;top:464.10px;font-size:4px;color:#111;font-weight:700;transform:scaleX(0.920);-webkit-text-stroke:0;">Press E</div>
<div class="t" style="left:110.5px;top:469.10px;font-size:3.9px;color:#5a5a6a;transform:scaleX(0.950);-webkit-text-stroke:0;">Projects</div>
<div class="t" style="left:110.5px;top:474.10px;font-size:3.9px;color:#5a5a6a;transform:scaleX(0.950);-webkit-text-stroke:0;">faces</div>
<div class="t" style="left:110.5px;top:478.10px;font-size:3.9px;color:#5a5a6a;transform:scaleX(0.950);-webkit-text-stroke:0;">outward</div>
<div class="t" style="left:107.0px;top:470.10px;font-size:3.8px;color:#a04040;transform:scaleX(0.902);-webkit-text-stroke:0;">•</div>
<div class="t" style="left:133.0px;top:459.10px;font-size:3.8px;color:#333;transform:scaleX(0.902);-webkit-text-stroke:0;">•</div>
<div class="t" style="left:136.8px;top:458.10px;font-size:4px;color:#222;transform:scaleX(1.061);-webkit-text-stroke:0;">Inset</div>
<div class="t" style="left:140.0px;top:465.10px;font-size:3.8px;color:#333;transform:scaleX(0.902);-webkit-text-stroke:0;">•</div>
<div class="t" style="left:143.5px;top:464.10px;font-size:4px;color:#111;font-weight:700;transform:scaleX(0.953);-webkit-text-stroke:0;">Press I</div>
<div class="t" style="left:143.5px;top:469.10px;font-size:3.9px;color:#5a5a6a;transform:scaleX(0.950);-webkit-text-stroke:0;">Insets a</div>
<div class="t" style="left:143.5px;top:474.10px;font-size:3.9px;color:#5a5a6a;transform:scaleX(0.950);-webkit-text-stroke:0;">new face</div>
<div class="t" style="left:143.5px;top:478.10px;font-size:3.9px;color:#5a5a6a;transform:scaleX(0.950);-webkit-text-stroke:0;">inward</div>
<div class="t" style="left:140.0px;top:470.10px;font-size:3.8px;color:#a04040;transform:scaleX(0.902);-webkit-text-stroke:0;">•</div>
<div class="t" style="left:168.8px;top:459.10px;font-size:3.8px;color:#333;transform:scaleX(0.902);-webkit-text-stroke:0;">•</div>
<div class="t" style="left:172.6px;top:458.10px;font-size:4px;color:#222;transform:scaleX(1.041);-webkit-text-stroke:0;">Loop Cut</div>
<div class="t" style="left:175.8px;top:465.10px;font-size:3.8px;color:#333;transform:scaleX(0.902);-webkit-text-stroke:0;">•</div>
<div class="t" style="left:179.3px;top:464.10px;font-size:4px;color:#111;font-weight:700;transform:scaleX(0.957);-webkit-text-stroke:0;">Press Ctrl + R</div>
<div class="t" style="left:179.3px;top:469.10px;font-size:3.9px;color:#5a5a6a;transform:scaleX(0.950);-webkit-text-stroke:0;">Creates a cut</div>
<div class="t" style="left:179.3px;top:474.10px;font-size:3.9px;color:#5a5a6a;transform:scaleX(0.950);-webkit-text-stroke:0;">around an</div>
<div class="t" style="left:179.3px;top:478.10px;font-size:3.9px;color:#5a5a6a;transform:scaleX(0.950);-webkit-text-stroke:0;">object</div>
<div class="t" style="left:175.8px;top:470.10px;font-size:3.8px;color:#a04040;transform:scaleX(0.902);-webkit-text-stroke:0;">•</div>
<div class="a" style="left:110px;top:484.50px;width:14px;height:14.1px;background:#4a72b8;border:0.800px solid #1c1c1c;"></div>
<div class="a" style="left:141.4px;top:484.50px;width:16.4px;height:14.1px;background:#4a72b8;border:0.800px solid #1c1c1c;"></div>
<div class="a" style="left:176.6px;top:484.50px;width:17.2px;height:14.1px;background:#4a72b8;border:0.800px solid #1c1c1c;"></div>
<svg style="left:110px;top:484.5px" width="14" height="14"><rect x="3" y="4.500" width="7" height="6.500" fill="none" stroke="#dfe6f2" stroke-width=".8"/><path d="M3 4.500l2-2.500h6.500l-1.500 2.500" fill="#5fe0a0" stroke="#5fe0a0" stroke-width=".5"/></svg>
<svg style="left:141.4px;top:484.5px" width="16.4" height="14"><rect x="4" y="3" width="9" height="8.500" fill="none" stroke="#dfe6f2" stroke-width=".8"/><rect x="5.500" y="5.500" width="4.500" height="4.500" fill="#5fe0a0"/><rect x="6.800" y="6.800" width="2" height="2" fill="#3a5a90"/></svg>
<svg style="left:176.6px;top:484.5px" width="17.2" height="14"><path d="M4 4l3-1.500v8l-3 1zM8 2.500l5-.5v8.500l-5 1z" fill="none" stroke="#c8d4ea" stroke-width=".8"/></svg>
<div class="t" style="left:32.5px;top:499.10px;font-size:3.8px;color:#a04040;transform:scaleX(0.902);-webkit-text-stroke:0;">•</div>
<div class="t" style="left:36.0px;top:498.10px;font-size:3.9px;color:#5a5a6a;transform:scaleX(0.902);-webkit-text-stroke:0;">Bevel</div>
<div class="t" style="left:39.0px;top:505.10px;font-size:3.8px;color:#a04040;transform:scaleX(0.902);-webkit-text-stroke:0;">•</div>
<div class="t" style="left:42.8px;top:504.10px;font-size:3.9px;color:#222;transform:scaleX(0.944);-webkit-text-stroke:0;">Press Ctrl + B</div>
<div class="t" style="left:39.0px;top:510.10px;font-size:3.8px;color:#a04040;transform:scaleX(0.902);-webkit-text-stroke:0;">•</div>
<div class="t" style="left:42.8px;top:509.10px;font-size:3.9px;color:#3a3a4a;transform:scaleX(0.950);-webkit-text-stroke:0;">Creates new</div>
<div class="t" style="left:42.8px;top:513.10px;font-size:3.9px;color:#3a3a4a;transform:scaleX(0.950);-webkit-text-stroke:0;">faces/bevels</div>
<div class="t" style="left:42.8px;top:517.10px;font-size:3.9px;color:#3a3a4a;transform:scaleX(0.950);-webkit-text-stroke:0;">around an</div>
<div class="t" style="left:42.8px;top:522.10px;font-size:3.9px;color:#3a3a4a;transform:scaleX(0.950);-webkit-text-stroke:0;">edge</div>
<div class="t" style="left:69.5px;top:499.10px;font-size:3.8px;color:#a04040;transform:scaleX(0.902);-webkit-text-stroke:0;">•</div>
<div class="t" style="left:73.0px;top:498.10px;font-size:3.9px;color:#6a6a7a;transform:scaleX(0.938);-webkit-text-stroke:0;">Knife Tool</div>
<div class="t" style="left:76.5px;top:505.10px;font-size:3.8px;color:#a04040;transform:scaleX(0.902);-webkit-text-stroke:0;">•</div>
<div class="t" style="left:80.0px;top:504.10px;font-size:3.9px;color:#4a4a5a;transform:scaleX(0.950);-webkit-text-stroke:0;">Creates</div>
<div class="t" style="left:80.0px;top:508.10px;font-size:3.9px;color:#4a4a5a;transform:scaleX(0.950);-webkit-text-stroke:0;">new edges</div>
<div class="t" style="left:80.0px;top:512.10px;font-size:3.9px;color:#4a4a5a;transform:scaleX(0.950);-webkit-text-stroke:0;">and</div>
<div class="t" style="left:80.0px;top:517.10px;font-size:3.9px;color:#4a4a5a;transform:scaleX(0.950);-webkit-text-stroke:0;">vertices</div>
<div class="t" style="left:80.0px;top:521.10px;font-size:3.9px;color:#4a4a5a;transform:scaleX(0.950);-webkit-text-stroke:0;">with clicks</div>
<div class="t" style="left:9.0px;top:549.10px;font-size:10px;color:#e8e8e8;transform:scaleX(0.989);">8</div>
<div class="a" style="left:26px;top:549.6px;width:188px;height:106px;background:#fff;border-radius:3px"></div>
<div class="t" style="left:40.5px;top:562.10px;font-size:7.4px;color:#161616;transform:scaleX(1.040);-webkit-text-stroke:0;">Vertex Mode</div>
<div class="a" style="left:165.9px;top:557.00px;width:34.9px;height:13.3px;background:#2e2e2e;"></div>
<div class="a" style="left:166.9px;top:558.00px;width:10.633333333333333px;height:11.3px;background:#4772b3;"></div>
<div class="a" style="left:170.09px;top:560.99px;width:4.785px;height:5.985px;background:#e8e8e8;"></div>
<div class="a" style="left:178.03333333333333px;top:558.00px;width:10.633333333333333px;height:11.3px;background:#5a5a5a;"></div>
<div class="a" style="left:181.22333333333333px;top:560.99px;width:4.785px;height:5.985px;background:#cfcfcf;"></div>
<div class="a" style="left:189.16666666666669px;top:558.00px;width:10.633333333333333px;height:11.3px;background:#5a5a5a;"></div>
<div class="a" style="left:192.35666666666668px;top:560.99px;width:4.785px;height:5.985px;background:#e8e8e8;"></div>
<div class="t" style="left:44.0px;top:580.10px;font-size:4.6px;color:#2c2c3a;transform:scaleX(1.161);-webkit-text-stroke:0;">Selects individual vertices of the</div>
<div class="t" style="left:44.0px;top:586.10px;font-size:4.6px;color:#2c2c3a;transform:scaleX(1.222);-webkit-text-stroke:0;">object</div>
<div class="t" style="left:44.0px;top:594.10px;font-size:4.6px;color:#2c2c3a;transform:scaleX(1.140);-webkit-text-stroke:0;">You can only move them around</div>
<div class="t" style="left:44.0px;top:600.10px;font-size:4.6px;color:#2c2c3a;transform:scaleX(1.181);-webkit-text-stroke:0;">and select multiple</div>
<div class="t" style="left:44.0px;top:608.10px;font-size:4.6px;color:#2c2c3a;transform:scaleX(1.026);-webkit-text-stroke:0;">Press 1</div>
<div class="t" style="left:40.6px;top:580.10px;font-size:4.4px;color:#333;transform:scaleX(0.909);-webkit-text-stroke:0;">•</div>
<div class="t" style="left:40.6px;top:594.10px;font-size:4.4px;color:#333;transform:scaleX(0.909);-webkit-text-stroke:0;">•</div>
<div class="t" style="left:40.6px;top:608.10px;font-size:4.4px;color:#333;transform:scaleX(0.909);-webkit-text-stroke:0;">•</div>
<svg style="left:123.800px;top:589.4px;overflow:hidden" width="52" height="49.600" viewBox="0 0 52 49.600"><rect width="52" height="49.600" fill="#3d3d3d"/><path d="M0 26l52-6M0 12l52-4M0 40l52-8M6 0l14 49.600M28 0l20 49.600M-6 10l10 39" stroke="#4a4a4a" stroke-width=".5" fill="none"/><path d="M15 0l24 49.600" stroke="#5d8a2a" stroke-width=".6"/><path d="M0 28l52-8" stroke="#a0324a" stroke-width=".6"/><path d="M14 13l20-4 6 7-1 20-17 5-7-8z" fill="#9a9a9a"/><path d="M14 13l20-4 6 7-19 4z" fill="#a4a4a4"/><path d="M14 13l7 7 1 21-7-8z" fill="#b0b0b0"/><path d="M21 20l19-4-1 20-17 5z" fill="#8e8e8e"/><circle cx="27" cy="24" r="1.200" fill="none" stroke="#e06030" stroke-width=".5"/></svg>
<div class="t" style="left:9.0px;top:671.10px;font-size:10px;color:#e8e8e8;transform:scaleX(0.989);">9</div>
<div class="a" style="left:26px;top:671.2px;width:188px;height:60px;background:#fff;border-radius:3px"></div>
<div class="t" style="left:40.5px;top:684.10px;font-size:7.4px;color:#161616;transform:scaleX(1.022);-webkit-text-stroke:0;">Edge Mode</div>
<div class="a" style="left:168.9px;top:678.00px;width:31.9px;height:14px;background:#2e2e2e;"></div>
<div class="a" style="left:169.9px;top:679.00px;width:9.633333333333333px;height:12px;background:#5a5a5a;"></div>
<div class="a" style="left:172.79px;top:682.20px;width:4.335px;height:6.3px;background:#e8e8e8;"></div>
<div class="a" style="left:180.03333333333333px;top:679.00px;width:9.633333333333333px;height:12px;background:#4772b3;"></div>
<div class="a" style="left:182.92333333333332px;top:682.20px;width:4.335px;height:6.3px;background:#cfcfcf;"></div>
<div class="a" style="left:190.16666666666669px;top:679.00px;width:9.633333333333333px;height:12px;background:#5a5a5a;"></div>
<div class="a" style="left:193.05666666666667px;top:682.20px;width:4.335px;height:6.3px;background:#e8e8e8;"></div>
<div class="t" style="left:44.0px;top:701.10px;font-size:4.6px;color:#23232f;transform:scaleX(1.150);-webkit-text-stroke:0;">Selects edges of the object</div>
<div class="t" style="left:44.0px;top:709.10px;font-size:4.6px;color:#23232f;transform:scaleX(1.154);-webkit-text-stroke:0;">You can move/scale/rotate them and</div>
<div class="t" style="left:44.0px;top:715.10px;font-size:4.6px;color:#23232f;transform:scaleX(1.201);-webkit-text-stroke:0;">select multiple</div>
<div class="t" style="left:40.6px;top:701.10px;font-size:4.4px;color:#333;transform:scaleX(0.909);-webkit-text-stroke:0;">•</div>
<div class="t" style="left:40.6px;top:709.10px;font-size:4.4px;color:#333;transform:scaleX(0.909);-webkit-text-stroke:0;">•</div>
<div class="a" style="left:132px;top:699.00px;width:68.8px;height:30px;background:#424242;"></div>
<svg style="left:132px;top:699px" width="69" height="22"><path d="M22 22c4-4 14-5.500 24-3.500l8 3.500z" fill="#8e8e8e"/></svg>
</div>
<!-- ===== main slide content ===== -->
<div class="t" style="left:556.5px;top:312.10px;font-size:36.6px;color:#0e0e0e;transform:scaleX(1.033);-webkit-text-stroke:0.3px #0e0e0e;">Finish your</div>
<div class="t" style="left:520.0px;top:359.10px;font-size:36.6px;color:#0e0e0e;transform:scaleX(1.054);-webkit-text-stroke:0.3px #0e0e0e;">Project: Create</div>
<div class="t" style="left:543.9px;top:406.10px;font-size:36.6px;color:#0e0e0e;transform:scaleX(1.071);-webkit-text-stroke:0.3px #0e0e0e;">an Obstacle</div>
<div class="t" style="left:586.0px;top:452.10px;font-size:36.6px;color:#0e0e0e;transform:scaleX(1.054);-webkit-text-stroke:0.3px #0e0e0e;">Course</div>
<div class="t" style="left:544.7px;top:528.10px;font-size:15.2px;color:#141414;transform:scaleX(1.126);-webkit-text-stroke:0.12px #141414;">Create a platformer course</div>
<div class="t" style="left:539.0px;top:547.10px;font-size:15.2px;color:#141414;transform:scaleX(1.136);-webkit-text-stroke:0.12px #141414;">with multiple shapes (refrain</div>
<div class="t" style="left:551.2px;top:566.10px;font-size:15.2px;color:#141414;transform:scaleX(1.110);-webkit-text-stroke:0.12px #141414;">from using MetaBalls yet)</div>
<svg style="left:635px;top:579px" width="77" height="3"><path d="M0 1.5 q1.500 -1.500 3 0 t3 0 t3 0 t3 0 t3 0 t3 0 t3 0 t3 0 t3 0 t3 0 t3 0 t3 0 t3 0 t3 0 t3 0 t3 0 t3 0 t3 0 t3 0 t3 0 t3 0 t3 0 t3 0 t3 0 t3 0 t2 0" fill="none" stroke="#f08a8a" stroke-width=".8"/></svg>
<div class="a" style="left:874.5px;top:306.4px;width:358.5px;height:327.800px;overflow:hidden"><svg style="left:0;top:0" width="438" height="328" viewBox="0 0 438 328"><defs><linearGradient id="mcy" x1="0" x2="1" y1="0" y2="0"><stop offset="0" stop-color="#7d7d7d"/><stop offset=".45" stop-color="#a2a2a2"/><stop offset="1" stop-color="#858585"/></linearGradient><linearGradient id="mtb" x1="0" x2="0.35" y1="0" y2="1"><stop offset="0" stop-color="#b4b4b4"/><stop offset=".5" stop-color="#a2a2a2"/><stop offset="1" stop-color="#7c7c7c"/></linearGradient><radialGradient id="mhd" cx=".45" cy=".35" r=".7"><stop offset="0" stop-color="#c8c8c8"/><stop offset=".55" stop-color="#a2a2a2"/><stop offset="1" stop-color="#707070"/></radialGradient><linearGradient id="mfw" x1="0" x2="1" y1="0" y2="1"><stop offset="0" stop-color="#838383"/><stop offset="1" stop-color="#8b8b8b"/></linearGradient><clipPath id="mcl"><rect x="0" y="0" width="438" height="328"/></clipPath></defs><g clip-path="url(#mcl)"><rect x="0" y="0" width="438" height="328" fill="#3c3c3c"/><defs><linearGradient id="mfd" x1="0" x2="0.250" y1="0" y2="1"><stop offset=".12" stop-color="#fff" stop-opacity="0"/><stop offset=".55" stop-color="#fff" stop-opacity=".75"/><stop offset="1" stop-color="#fff" stop-opacity="1"/></linearGradient><mask id="mmk"><rect width="438" height="328" fill="url(#mfd)"/></mask></defs><path d="M-119.7 -2L-1.3 332M-116.7 -2L7.1 332M-113.6 -2L15.4 332M-110.6 -2L23.8 332M-107.6 -2L32.2 332M-101.5 -2L48.9 332M-98.5 -2L57.3 332M-95.5 -2L65.6 332M-92.4 -2L74.0 332M-89.4 -2L82.4 332M-86.4 -2L90.7 332M-83.3 -2L99.1 332M-80.3 -2L107.4 332M-77.3 -2L115.8 332M-71.2 -2L132.5 332M-68.2 -2L140.9 332M-65.2 -2L149.3 332M-62.1 -2L157.6 332M-59.1 -2L166.0 332M-56.1 -2L174.4 332M-53.0 -2L182.7 332M-50.0 -2L191.1 332M-47.0 -2L199.5 332M-40.9 -2L216.2 332M-37.9 -2L224.5 332M-34.9 -2L232.9 332M-31.8 -2L241.3 332M-28.8 -2L249.6 332M-25.8 -2L258.0 332M-22.8 -2L266.4 332M-19.7 -2L274.7 332M-16.7 -2L283.1 332M-10.6 -2L299.8 332M-7.6 -2L308.2 332M-4.6 -2L316.5 332M-1.6 -2L324.9 332M1.5 -2L333.3 332M4.5 -2L341.6 332M7.5 -2L350.0 332M10.6 -2L358.4 332M13.6 -2L366.7 332M19.6 -2L383.5 332M22.7 -2L391.8 332M25.7 -2L400.2 332M28.7 -2L408.5 332M31.8 -2L416.9 332M34.8 -2L425.3 332M37.8 -2L433.6 332M40.8 -2L442.0 332M43.9 -2L450.4 332M49.9 -2L467.1 332M53.0 -2L475.5 332M56.0 -2L483.8 332M59.0 -2L492.2 332M62.0 -2L500.6 332M65.1 -2L508.9 332M68.1 -2L517.3 332M71.1 -2L525.6 332M74.2 -2L534.0 332M80.2 -2L550.7 332M83.2 -2L559.1 332M86.3 -2L567.5 332M89.3 -2L575.8 332M92.3 -2L584.2 332M95.4 -2L592.6 332M98.4 -2L600.9 332M101.4 -2L609.3 332M104.4 -2L617.6 332M110.5 -2L634.4 332M113.5 -2L642.7 332M116.6 -2L651.1 332M119.6 -2L659.5 332M122.6 -2L667.8 332M125.6 -2L676.2 332M128.7 -2L684.6 332M131.7 -2L692.9 332M134.7 -2L701.3 332M140.8 -2L718.0 332M143.8 -2L726.4 332M146.8 -2L734.7 332M149.9 -2L743.1 332M152.9 -2L751.5 332M155.9 -2L759.8 332M159.0 -2L768.2 332M162.0 -2L776.6 332M165.0 -2L784.9 332M171.1 -2L801.7 332M174.1 -2L810.0 332M177.1 -2L818.4 332M180.2 -2L826.7 332M183.2 -2L835.1 332M186.2 -2L843.5 332M189.2 -2L851.8 332M192.3 -2L860.2 332M195.3 -2L868.6 332M201.4 -2L885.3 332M204.4 -2L893.7 332M207.4 -2L902.0 332M210.4 -2L910.4 332M213.5 -2L918.7 332M216.5 -2L927.1 332M219.5 -2L935.5 332M222.6 -2L943.8 332M225.6 -2L952.2 332M231.6 -2L968.9 332M234.7 -2L977.3 332M237.7 -2L985.7 332M240.7 -2L994.0 332M243.8 -2L1002.4 332M246.8 -2L1010.7 332M249.8 -2L1019.1 332M252.8 -2L1027.5 332M255.9 -2L1035.8 332M261.9 -2L1052.6 332M265.0 -2L1060.9 332M268.0 -2L1069.3 332M271.0 -2L1077.7 332M274.0 -2L1086.0 332M277.1 -2L1094.4 332M280.1 -2L1102.8 332M283.1 -2L1111.1 332M286.2 -2L1119.5 332M292.2 -2L1136.2 332M295.2 -2L1144.6 332M298.3 -2L1152.9 332M301.3 -2L1161.3 332M304.3 -2L1169.7 332M307.4 -2L1178.0 332M310.4 -2L1186.4 332M313.4 -2L1194.8 332M316.4 -2L1203.1 332M322.5 -2L1219.8 332M325.5 -2L1228.2 332M328.6 -2L1236.6 332M331.6 -2L1244.9 332M334.6 -2L1253.3 332M337.6 -2L1261.7 332M340.7 -2L1270.0 332M343.7 -2L1278.4 332M346.7 -2L1286.8 332M352.8 -2L1303.5 332M355.8 -2L1311.8 332M358.8 -2L1320.2 332M361.9 -2L1328.6 332M364.9 -2L1336.9 332M367.9 -2L1345.3 332M371.0 -2L1353.7 332M374.0 -2L1362.0 332M377.0 -2L1370.4 332M383.1 -2L1387.1 332M386.1 -2L1395.5 332M389.1 -2L1403.9 332M392.2 -2L1412.2 332M395.2 -2L1420.6 332M398.2 -2L1428.9 332M401.2 -2L1437.3 332M404.3 -2L1445.7 332M407.3 -2L1454.0 332M413.4 -2L1470.8 332M416.4 -2L1479.1 332M419.4 -2L1487.5 332M422.4 -2L1495.9 332M425.5 -2L1504.2 332M428.5 -2L1512.6 332M431.5 -2L1520.9 332M434.6 -2L1529.3 332M437.6 -2L1537.7 332M-3 -2.7L441 -66.1M-3 -2.0L441 -65.6M-3 -1.2L441 -65.1M-3 -0.4L441 -64.6M-3 1.2L441 -63.5M-3 1.9L441 -63.0M-3 2.8L441 -62.5M-3 3.6L441 -61.9M-3 4.4L441 -61.4M-3 5.2L441 -60.8M-3 6.0L441 -60.3M-3 6.9L441 -59.7M-3 7.7L441 -59.2M-3 9.4L441 -58.0M-3 10.3L441 -57.4M-3 11.2L441 -56.9M-3 12.1L441 -56.3M-3 13.0L441 -55.7M-3 13.9L441 -55.1M-3 14.8L441 -54.5M-3 15.7L441 -53.9M-3 16.6L441 -53.3M-3 18.5L441 -52.0M-3 19.4L441 -51.4M-3 20.4L441 -50.8M-3 21.3L441 -50.1M-3 22.3L441 -49.5M-3 23.3L441 -48.8M-3 24.3L441 -48.2M-3 25.3L441 -47.5M-3 26.3L441 -46.8M-3 28.3L441 -45.5M-3 29.4L441 -44.8M-3 30.4L441 -44.1M-3 31.5L441 -43.4M-3 32.6L441 -42.7M-3 33.6L441 -41.9M-3 34.7L441 -41.2M-3 35.8L441 -40.5M-3 36.9L441 -39.7M-3 39.2L441 -38.2M-3 40.3L441 -37.5M-3 41.5L441 -36.7M-3 42.7L441 -35.9M-3 43.8L441 -35.2M-3 45.0L441 -34.4M-3 46.2L441 -33.6M-3 47.5L441 -32.8M-3 48.7L441 -31.9M-3 51.2L441 -30.3M-3 52.4L441 -29.4M-3 53.7L441 -28.6M-3 55.0L441 -27.7M-3 56.3L441 -26.9M-3 57.6L441 -26.0M-3 59.0L441 -25.1M-3 60.3L441 -24.2M-3 61.7L441 -23.3M-3 64.5L441 -21.5M-3 65.9L441 -20.5M-3 67.3L441 -19.6M-3 68.7L441 -18.6M-3 70.2L441 -17.6M-3 71.7L441 -16.7M-3 73.2L441 -15.7M-3 74.7L441 -14.7M-3 76.2L441 -13.7M-3 79.3L441 -11.6M-3 80.9L441 -10.5M-3 82.5L441 -9.5M-3 84.1L441 -8.4M-3 85.7L441 -7.3M-3 87.4L441 -6.2M-3 89.1L441 -5.1M-3 90.7L441 -4.0M-3 92.5L441 -2.9M-3 96.0L441 -0.5M-3 97.7L441 0.6M-3 99.5L441 1.8M-3 101.4L441 3.1M-3 103.2L441 4.3M-3 105.1L441 5.5M-3 107.0L441 6.8M-3 108.9L441 8.1M-3 110.8L441 9.4M-3 114.8L441 12.0M-3 116.8L441 13.3M-3 118.9L441 14.7M-3 120.9L441 16.1M-3 123.0L441 17.5M-3 125.2L441 18.9M-3 127.3L441 20.3M-3 129.5L441 21.8M-3 131.7L441 23.2M-3 136.3L441 26.3M-3 138.6L441 27.8M-3 140.9L441 29.4M-3 143.3L441 30.9M-3 145.7L441 32.5M-3 148.2L441 34.2M-3 150.7L441 35.8M-3 153.2L441 37.5M-3 155.7L441 39.2M-3 161.0L441 42.7M-3 163.7L441 44.5M-3 166.4L441 46.3M-3 169.1L441 48.1M-3 171.9L441 50.0M-3 174.8L441 51.9M-3 177.7L441 53.8M-3 180.6L441 55.7M-3 183.6L441 57.7M-3 189.7L441 61.8M-3 192.9L441 63.9M-3 196.1L441 66.0M-3 199.3L441 68.1M-3 202.6L441 70.3M-3 205.9L441 72.5M-3 209.3L441 74.8M-3 212.8L441 77.1M-3 216.3L441 79.5M-3 223.6L441 84.3M-3 227.3L441 86.7M-3 231.1L441 89.3M-3 234.9L441 91.8M-3 238.9L441 94.4M-3 242.9L441 97.1M-3 246.9L441 99.8M-3 251.1L441 102.5M-3 255.3L441 105.4M-3 264.0L441 111.1M-3 268.5L441 114.1M-3 273.1L441 117.2M-3 277.7L441 120.3M-3 282.5L441 123.4M-3 287.4L441 126.6M-3 292.3L441 129.9M-3 297.4L441 133.3M-3 302.5L441 136.7M-3 313.2L441 143.8M-3 318.7L441 147.5M-3 324.3L441 151.2M-3 330.1L441 155.0M-3 336.0L441 159.0M-3 342.0L441 163.0M-3 348.2L441 167.0M-3 354.5L441 171.2M-3 360.9L441 175.5M-3 374.3L441 184.4M-3 381.2L441 189.0M-3 388.3L441 193.7M-3 395.6L441 198.6M-3 403.0L441 203.5M-3 410.7L441 208.6M-3 418.6L441 213.8M-3 426.6L441 219.2M-3 434.9L441 224.7M-3 452.2L441 236.1M-3 461.1L441 242.1M-3 470.4L441 248.3M-3 479.9L441 254.6M-3 489.7L441 261.1M-3 499.7L441 267.8M-3 510.1L441 274.7M-3 520.8L441 281.8M-3 531.8L441 289.1M-3 554.9L441 304.4M-3 567.0L441 312.5M-3 579.5L441 320.8M-3 592.4L441 329.4" stroke="#474747" stroke-width=".5" fill="none" mask="url(#mmk)"/><path d="M-104.5 -2L40.5 332M-74.3 -2L124.2 332M-44.0 -2L207.8 332M-13.7 -2L291.5 332M46.9 -2L458.7 332M77.2 -2L542.4 332M107.5 -2L626.0 332M137.8 -2L709.6 332M168.0 -2L793.3 332M198.3 -2L876.9 332M228.6 -2L960.6 332M258.9 -2L1044.2 332M289.2 -2L1127.8 332M319.5 -2L1211.5 332M349.8 -2L1295.1 332M380.0 -2L1378.8 332M410.3 -2L1462.4 332M440.6 -2L1546.0 332M-3 0.4L441 -64.0M-3 8.6L441 -58.6M-3 17.5L441 -52.6M-3 27.3L441 -46.1M-3 38.1L441 -39.0M-3 49.9L441 -31.1M-3 63.1L441 -22.4M-3 77.7L441 -12.6M-3 94.2L441 -1.7M-3 112.8L441 10.7M-3 134.0L441 24.7M-3 158.3L441 40.9M-3 186.6L441 59.7M-3 219.9L441 81.8M-3 307.8L441 140.2M-3 367.5L441 179.9M-3 443.4L441 230.3M-3 543.2L441 296.6" stroke="#545454" stroke-width=".8" fill="none"/><line x1="18.8" y1="0" x2="371" y2="328" stroke="#64902c" stroke-width="1"/><line x1="0" y1="258.6" x2="445" y2="106.9" stroke="#a8324a" stroke-width="1"/><polygon points="77.5,172.4 77.5,174.6 156.6,287.5 366.2,198.3 366.2,195.3 156.6,284.5" fill="#6e6e6e" /><polygon points="77.5,172.4 156.6,284.5 366.2,195.3 247.7,120.8" fill="#929292" /><g transform="rotate(32.5 290.9 147.9)"><rect x="245.9" y="132.4" width="90" height="31" rx="15.5" fill="url(#mtb)"/><ellipse cx="328.9" cy="147.9" rx="6.500" ry="14.500" fill="#7a7a7a"/><ellipse cx="329.9" cy="147.9" rx="5" ry="12.500" fill="#8e8e8e"/></g><ellipse cx="286.1" cy="149.0" rx="1.9" ry="1.9" fill="#e8902c" /><polygon points="144.9,110.3 244.7,85.8 242.8,148.7 191.2,161.1 146.0,173.5" fill="#686868" /><polygon points="200.6,133.6 213.0,131.3 214.9,139.6 202.5,141.9" fill="#a4a4a4" /><polygon points="220.2,119.7 230.7,117.4 232.6,125.3 222.4,127.6" fill="#a4a4a4" /><polygon points="187.4,147.2 191.2,145.7 200.6,155.4 198.0,157.7" fill="#9c9c9c" /><line x1="215.7" y1="156.2" x2="243.9" y2="102.7" stroke="#a0a0a0" stroke-width="1.1" /><line x1="225.8" y1="153.6" x2="251.4" y2="106.5" stroke="#a0a0a0" stroke-width="1.1" /><line x1="219.9" y1="148.2" x2="229.7" y2="146.5" stroke="#a8a8a8" stroke-width="1" /><line x1="224.1" y1="140.2" x2="233.5" y2="139.4" stroke="#a8a8a8" stroke-width="1" /><line x1="228.4" y1="132.1" x2="237.4" y2="132.4" stroke="#a8a8a8" stroke-width="1" /><line x1="232.6" y1="124.1" x2="241.2" y2="125.3" stroke="#a8a8a8" stroke-width="1" /><line x1="236.8" y1="116.1" x2="245.0" y2="118.3" stroke="#a8a8a8" stroke-width="1" /><line x1="241.1" y1="108.1" x2="248.9" y2="111.2" stroke="#a8a8a8" stroke-width="1" /><polygon points="261.6,106.5 276.6,106.5 269.1,189.3 253.7,189.3" fill="url(#mcy)" /><ellipse cx="261.4" cy="189.3" rx="7.7" ry="3.4" fill="#8a8a8a" /><ellipse cx="269.5" cy="106.5" rx="26.7" ry="9.4" fill="#858585" /><ellipse cx="269.5" cy="104.3" rx="26.7" ry="9.4" fill="#a8a8a8" /><polygon points="261.2,89.6 277.8,89.6 277.8,100.9 261.2,100.9" fill="url(#mcy)" /><ellipse cx="269.5" cy="100.9" rx="8.3" ry="3.0" fill="#909090" /><polygon points="247.7,66.8 257.9,52.7 262.3,55.3 264.5,57.5 271.2,48.8 276.5,52.7 267.2,62.9 259.2,76.2 250.8,73.1" fill="#a6a6a6" stroke="#a6a6a6" stroke-width="1.500" stroke-linejoin="round"/><polygon points="299.5,67.7 310.6,64.6 313.7,68.4 308.4,75.3 300.9,76.3" fill="#a2a2a2" stroke="#a2a2a2" stroke-width="1.500" stroke-linejoin="round"/><polygon points="300.9,76.3 308.4,75.3 313.7,68.4 312.8,72.6 307.9,78.8 300.0,79.7" fill="#7e7670"/><ellipse cx="278.2" cy="71.3" rx="21.800" ry="19.200" fill="url(#mhd)"/><ellipse cx="257.9" cy="86.3" rx="4.300" ry="7" fill="#8e8e8e" transform="rotate(32 257.9 86.3)"/><ellipse cx="258.5" cy="85.0" rx="3.600" ry="6" fill="#a4a4a4" transform="rotate(32 258.5 85.0)"/><polygon points="144.9,110.3 223.2,180.7 220.2,252.2 146.0,173.5" fill="url(#mfw)" /><line x1="144.9" y1="110.3" x2="223.2" y2="180.7" stroke="#a6a6a6" stroke-width="0.8" /><polygon points="220.2,179.5 223.6,181.4 220.9,252.5 217.9,249.9" fill="#9a9a9a" /><polygon points="102.0,129.8 112.9,127.6 115.2,174.3 106.9,176.9" fill="#7c7c7c" /><polygon points="92.6,126.1 116.7,120.8 125.3,128.0 100.1,132.9" fill="#939393" /><polygon points="110.3,113.3 123.5,110.3 129.1,115.9 115.2,119.3" fill="#929292" /><line x1="109.5" y1="85.8" x2="107.7" y2="121.6" stroke="#a0a0a0" stroke-width="0.9" /><line x1="109.5" y1="85.8" x2="117.8" y2="129.8" stroke="#a0a0a0" stroke-width="0.9" /><line x1="115.2" y1="88.4" x2="115.2" y2="113.3" stroke="#a0a0a0" stroke-width="0.9" /><line x1="122.7" y1="90.7" x2="124.2" y2="114.0" stroke="#a0a0a0" stroke-width="0.9" /><ellipse cx="118.6" cy="91.5" rx="3.8" ry="5.3" fill="none" stroke="#bdbdbd" stroke-width="1.400"/><line x1="124.2" y1="89.6" x2="193.1" y2="98.2" stroke="#9c9c9c" stroke-width="0.8" /><line x1="124.2" y1="90.7" x2="183.7" y2="99.7" stroke="#9c9c9c" stroke-width="0.7" /><polygon points="114.4,149.8 119.7,161.1 127.2,170.5 137.8,178.0 137.0,190.1 115.9,195.0" fill="#7a7a7a" /><path d="M114.4,148.7 L131.0,141.1 Q138.5,163.0 158.1,169.0 L137.8,177.3 Q119.7,168.6 114.4,148.7Z" fill="#9c9c9c"/><line x1="118.3" y1="159.5" x2="135.5" y2="151.7" stroke="#808080" stroke-width="0.6" /><line x1="122.7" y1="165.0" x2="140.6" y2="157.1" stroke="#808080" stroke-width="0.6" /><line x1="127.8" y1="169.8" x2="146.5" y2="161.7" stroke="#808080" stroke-width="0.6" /><line x1="132.5" y1="173.6" x2="151.9" y2="165.4" stroke="#808080" stroke-width="0.6" /><line x1="140.4" y1="176.9" x2="161.9" y2="263.8" stroke="#7c7c7c" stroke-width="1.7" /><line x1="153.6" y1="172.7" x2="175.4" y2="253.3" stroke="#7c7c7c" stroke-width="1.7" /><line x1="143.0" y1="187.3" x2="156.2" y2="182.4" stroke="#848484" stroke-width="1.3" /><line x1="146.2" y1="200.4" x2="159.5" y2="194.5" stroke="#848484" stroke-width="1.3" /><line x1="149.4" y1="213.4" x2="162.7" y2="206.6" stroke="#848484" stroke-width="1.3" /><line x1="152.6" y1="226.4" x2="166.0" y2="218.7" stroke="#848484" stroke-width="1.3" /><line x1="155.8" y1="239.5" x2="169.3" y2="230.7" stroke="#848484" stroke-width="1.3" /><line x1="159.1" y1="252.5" x2="172.6" y2="242.8" stroke="#848484" stroke-width="1.3" /><line x1="161.1" y1="223.2" x2="161.1" y2="265.3" stroke="#808080" stroke-width="2.4" /><line x1="191.6" y1="217.5" x2="191.6" y2="254.0" stroke="#808080" stroke-width="2.4" /><line x1="178.8" y1="211.9" x2="178.8" y2="219.4" stroke="#808080" stroke-width="2.4" /><ellipse cx="185.6" cy="207.5" rx="3.7" ry="3.3" fill="#8a8a8a" /><ellipse cx="185.1" cy="207.9" rx="2.1" ry="1.8" fill="#6e6e6e" /><ellipse cx="201.7" cy="205.8" rx="3.3" ry="3.7" fill="#858585" /><ellipse cx="194.7" cy="212.8" rx="4.6" ry="4.6" fill="#8c8c8c" /><ellipse cx="193.8" cy="206.6" rx="8.3" ry="6.8" fill="url(#mhd)" /><ellipse cx="191.4" cy="207.6" rx="1.7" ry="1.7" fill="#787878" /><ellipse cx="197.0" cy="208.3" rx="1.7" ry="1.7" fill="#787878" /><ellipse cx="191.4" cy="207.6" rx="0.7" ry="0.7" fill="#c0c0c0" /><ellipse cx="197.0" cy="208.3" rx="0.7" ry="0.7" fill="#c0c0c0" /><ellipse cx="195.1" cy="214.5" rx="2.5" ry="1.7" fill="#a6a6a6" /><ellipse cx="167.9" cy="202.6" rx="4.1" ry="3.6" fill="#8a8a8a" /><ellipse cx="167.4" cy="203.1" rx="2.3" ry="2.0" fill="#6e6e6e" /><ellipse cx="185.5" cy="200.8" rx="3.6" ry="4.1" fill="#858585" /><ellipse cx="177.8" cy="208.5" rx="5.0" ry="5.0" fill="#8c8c8c" /><ellipse cx="176.9" cy="201.7" rx="9.0" ry="7.4" fill="url(#mhd)" /><ellipse cx="174.2" cy="202.8" rx="1.8" ry="1.8" fill="#787878" /><ellipse cx="180.3" cy="203.5" rx="1.8" ry="1.8" fill="#787878" /><ellipse cx="174.2" cy="202.8" rx="0.7" ry="0.7" fill="#c0c0c0" /><ellipse cx="180.3" cy="203.5" rx="0.7" ry="0.7" fill="#c0c0c0" /><ellipse cx="178.3" cy="210.3" rx="2.7" ry="1.8" fill="#a6a6a6" /><ellipse cx="151.3" cy="218.5" rx="4.4" ry="3.9" fill="#8a8a8a" /><ellipse cx="150.8" cy="219.0" rx="2.4" ry="2.2" fill="#6e6e6e" /><ellipse cx="170.4" cy="216.6" rx="3.9" ry="4.4" fill="#858585" /><ellipse cx="162.1" cy="224.9" rx="5.4" ry="5.4" fill="#8c8c8c" /><ellipse cx="161.1" cy="217.5" rx="9.8" ry="8.0" fill="url(#mhd)" /><ellipse cx="158.2" cy="218.7" rx="2.0" ry="2.0" fill="#787878" /><ellipse cx="164.8" cy="219.5" rx="2.0" ry="2.0" fill="#787878" /><ellipse cx="158.2" cy="218.7" rx="0.8" ry="0.8" fill="#c0c0c0" /><ellipse cx="164.8" cy="219.5" rx="0.8" ry="0.8" fill="#c0c0c0" /><ellipse cx="162.6" cy="226.8" rx="2.9" ry="2.0" fill="#a6a6a6" /><polygon points="168.6,261.6 176.2,246.5 183.7,261.6" fill="#a4a4a4" /><ellipse cx="176.2" cy="261.6" rx="7.5" ry="2.3" fill="#9a9a9a" /><ellipse cx="317.4" cy="188.6" rx="9.0" ry="5.0" fill="#747474" /><polygon points="303.4,178.7 310.2,179.6 308.9,184.1" fill="#a0a0a0" /><polygon points="323.3,181.9 329.2,185.5 323.8,186.8" fill="#8a8a8a" /><ellipse cx="316.5" cy="183.7" rx="9.0" ry="7.7" fill="url(#mhd)" /><polygon points="319.7,190.0 323.3,189.1 325.1,196.8 322.9,196.3" fill="#9a9a9a" /><ellipse cx="314.7" cy="176.9" rx="2.7" ry="1.6" fill="#b4b4b4" /><ellipse cx="296.3" cy="199.7" rx="8.7" ry="4.8" fill="#747474" /><polygon points="282.9,190.2 289.4,191.1 288.1,195.4" fill="#a0a0a0" /><polygon points="302.0,193.2 307.6,196.7 302.4,198.0" fill="#8a8a8a" /><ellipse cx="295.5" cy="195.0" rx="8.7" ry="7.4" fill="url(#mhd)" /><polygon points="298.5,201.0 302.0,200.1 303.7,207.5 301.5,207.1" fill="#9a9a9a" /><ellipse cx="293.7" cy="188.5" rx="2.6" ry="1.6" fill="#b4b4b4" /><ellipse cx="265.5" cy="213.1" rx="9.0" ry="5.0" fill="#747474" /><polygon points="251.5,203.2 258.3,204.1 256.9,208.6" fill="#a0a0a0" /><polygon points="271.4,206.3 277.2,209.9 271.8,211.3" fill="#8a8a8a" /><ellipse cx="264.6" cy="208.1" rx="9.0" ry="7.7" fill="url(#mhd)" /><polygon points="267.8,214.5 271.4,213.5 273.2,221.2 270.9,220.8" fill="#9a9a9a" /><ellipse cx="262.8" cy="201.4" rx="2.7" ry="1.6" fill="#b4b4b4" /><ellipse cx="231.7" cy="225.7" rx="9.4" ry="5.2" fill="#747474" /><polygon points="217.1,215.4 224.1,216.3 222.7,221.0" fill="#a0a0a0" /><polygon points="237.8,218.7 243.9,222.4 238.3,223.8" fill="#8a8a8a" /><ellipse cx="230.7" cy="220.5" rx="9.4" ry="8.0" fill="url(#mhd)" /><polygon points="234.0,227.1 237.8,226.2 239.7,234.2 237.3,233.7" fill="#9a9a9a" /><ellipse cx="228.8" cy="213.5" rx="2.8" ry="1.7" fill="#b4b4b4" /><ellipse cx="280.4" cy="175.4" rx="4.1" ry="4.1" fill="none" stroke="#f0f0f0" stroke-width="1.100"/><ellipse cx="280.4" cy="175.4" rx="4.1" ry="4.1" fill="none" stroke="#e03030" stroke-width="1.100" stroke-dasharray="1.600 1.600"/><line x1="274.0" y1="175.4" x2="286.8" y2="175.4" stroke="#2a2a2a" stroke-width="0.5" /><line x1="280.4" y1="169.0" x2="280.4" y2="181.8" stroke="#2a2a2a" stroke-width="0.5" /></g></svg></div>
<!-- ===== zoom gallery tiles ===== -->
<div class="a" style="left:1295.200px;top:162px;width:56.400px;height:99px;overflow:hidden"><svg style="left:0;top:0" width="56.400" height="99" viewBox="0 0 56.400 99"><defs><linearGradient id="gbg" x1="0" x2="0.250" y1="0" y2="1"><stop offset="0" stop-color="#58a4f2"/><stop offset=".4" stop-color="#86bbf4"/><stop offset="1" stop-color="#c4dbf6"/></linearGradient><radialGradient id="gfc" cx=".45" cy=".45" r=".65"><stop offset="0" stop-color="#8c6a5c"/><stop offset=".7" stop-color="#64483f"/><stop offset="1" stop-color="#3c2e30"/></radialGradient><filter id="gbl" x="-5%" y="-5%" width="110%" height="110%"><feGaussianBlur stdDeviation=".55"/></filter></defs><rect width="56.400" height="99" fill="url(#gbg)"/><g filter="url(#gbl)"><path d="M-1 34c5 1 7.500 4 7.500 11v56h-7.500z" fill="#52719a"/><rect x="38.500" y="-1" width="19" height="55" fill="#7d9dc4"/><rect x="38.500" y="-1" width="2" height="55" fill="#7a5a48"/><rect x="40.500" y="-1" width=".8" height="55" fill="#c8d0e0"/><path d="M41 4h16M41 11h16M41 18h16M41 26h16M41 34h16M41 42h16M41 50h16" stroke="#6a6a78" stroke-width="1"/><rect x="48.800" y="20" width="5.200" height="17.500" fill="#a8c47a"/><rect x="42" y="5" width="5" height="5" fill="#4a70a8"/><rect x="49" y="5" width="6" height="5" fill="#3a62a0"/><rect x="42" y="12" width="12" height="5" fill="#9cc4dc"/><rect x="42" y="28" width="5" height="5" fill="#e0e8f0"/><rect x="42" y="44" width="10" height="5" fill="#70c0c8"/><path d="M10 99c2-6 8-7.500 14-7.500h22c6 0 9 2 10.500 7.500z" fill="#a8d0d8"/><path d="M27 80h19v12h-19z" fill="#5a4038"/><ellipse cx="36.500" cy="73" rx="14" ry="15.500" fill="url(#gfc)"/><path d="M20.500 66c-2-8 0-16 5-19.500 2-3.500 7-4.500 10-3.500 4-1.500 9 0 11.500 3 4.500 3 6 10 4.500 19.500-.8-4-2-6.500-3.500-8-5 3-16 3.500-22 1-3 1.500-4.500 4-5.500 7.500z" fill="#0d1318"/><path d="M27 67c2-.8 4-.8 6 0M40 67c2-.8 4-.8 6 0" stroke="#120c0c" stroke-width="1.600" fill="none"/><path d="M35.500 70c-.5 4-1 6-2 7.500 1.500 1 3.500 1 5 0" stroke="#4a342e" stroke-width=".8" fill="none"/><path d="M32 82.500c2.500.8 6 .8 9 0" stroke="#2e1c1c" stroke-width="1.300" fill="none"/><path d="M22 99c0-5 3-8 7-8.500l5 1.500 5-2.500c2-4 2.500-8 4-8.200s2.200 3.500 1.500 7.500c3-3.500 5.500-5.500 6.500-4.500s-1.500 5.500-3.500 8.500l-1.500 6.200z" fill="#9c7c70"/><path d="M43 82c.8 0 1.500 2 1.200 5.500" stroke="#d0b4aa" stroke-width="1.600" fill="none"/></g></svg></div>
<div class="a" style="left:1238.8px;top:245.4px;width:58.0px;height:13.800px;border-radius:3px;background:rgba(44,44,44,.92)"></div>
<svg style="left:1240.3999999999999px;top:246.9px" width="10" height="11"><rect x="3.300" y="0.800" width="3.400" height="6" rx="1.700" fill="#e8504e"/><path d="M1.800 5.200a3.200 3.200 0 0 0 6.400 0M5 8.400v1.800" fill="none" stroke="#e8504e" stroke-width="1"/><path d="M9 0.500L1.200 10.500" stroke="#e8504e" stroke-width="1.200"/></svg>
<div class="t" style="left:1253.6px;top:247.10px;font-size:9.8px;color:#f4f4f4;transform:scaleX(0.853);">Geeth (TA)</div>
<div class="a" style="left:1411.100px;top:162px;width:176px;height:99px;overflow:hidden;border-radius:0 5px 0 0"><svg style="left:0;top:0" width="176" height="99" viewBox="0 0 176 99"><defs><linearGradient id="hw" x1="0" x2="1" y1="0" y2="0"><stop offset="0" stop-color="#d6c9c6"/><stop offset="1" stop-color="#ddd2ce"/></linearGradient><radialGradient id="hf" cx=".5" cy=".45" r=".65"><stop offset="0" stop-color="#e0b0a0"/><stop offset="1" stop-color="#b88878"/></radialGradient><linearGradient id="sofa" x1="0" x2="0" y1="0" y2="1"><stop offset="0" stop-color="#5a4a48"/><stop offset=".5" stop-color="#3e3230"/><stop offset="1" stop-color="#4a3e3c"/></linearGradient><filter id="hbl" x="-5%" y="-5%" width="110%" height="110%"><feGaussianBlur stdDeviation=".6"/></filter></defs><rect width="176" height="99" fill="url(#hw)"/><g filter="url(#hbl)"><path d="M135 58l41 7.500v33.500h-41z" fill="#f1ede9"/><path d="M135 58.500l41 7.500" stroke="#fbf9f6" stroke-width="2.500"/><path d="M145 74l31 6" stroke="#dcd6d0" stroke-width="1" fill="none"/><path d="M145 74v25" stroke="#dcd6d0" stroke-width="1"/><rect x="135" y="12" width="2" height="87" fill="#cfc4c0"/><rect x="106" y="17" width="29" height="66" fill="#8c6a50"/><rect x="106" y="9" width="1.300" height="12" fill="#555"/><rect x="108" y="19" width="24" height="13" fill="#c8b8b0"/><rect x="108" y="36" width="24" height="17" fill="#a89080"/><rect x="108" y="56" width="24" height="18" fill="#5a5460"/><rect x="112" y="14.500" width="20" height="3" fill="#e0c050"/><path d="M120 24v8M123 24v8M126 23v9M129 25v7" stroke="#d8d8e8" stroke-width="1.800"/><path d="M121.500 24v8" stroke="#c04040" stroke-width="1"/><path d="M122 40v13M125 40v13M128 41v12M131 42v11" stroke="#3f8fb8" stroke-width="1.800"/><path d="M123.500 40v13M129.500 42v11" stroke="#e8e0d8" stroke-width="1.200"/><path d="M110 60l3 12M114 60l2 12M118 60v12M122 60v12M126 60v12M130 61v11" stroke="#b0a090" stroke-width="1.500"/><path d="M116 60v12M124 60v12" stroke="#b84040" stroke-width="1"/><rect x="106" y="32" width="27" height="2" fill="#a87850"/><rect x="106" y="53" width="27" height="2" fill="#a87850"/><rect x="132.500" y="8" width="2.200" height="78" fill="#10141c"/><path d="M0 46c8-3 25-3 34-1 8-2.500 22-2.500 30 0v40h-64z" fill="url(#sofa)"/><path d="M33 46v22" stroke="#2a2220" stroke-width="1"/><ellipse cx="17" cy="54" rx="11" ry="5" fill="#6a5a58" opacity=".7"/><ellipse cx="50" cy="56" rx="9" ry="6" fill="#7a6a68" opacity=".6"/><path d="M0 70h40l-4 18h-36z" fill="#3a302e"/><ellipse cx="4" cy="64" rx="6" ry="8" fill="#e8e0d8"/><ellipse cx="6" cy="59" rx="5" ry="4" fill="#8a4a30"/><path d="M15 62c8-3 22-3 30-1l8 8c-10 4-26 5-34 5z" fill="#e6ded6"/><circle cx="28" cy="65" r="2" fill="#e08060"/><circle cx="41" cy="66" r="1.800" fill="#e07060"/><path d="M12 72l30 2 6 4-30 6z" fill="#d8d2cc"/><path d="M30 86c2-10 14-13 32-12l8 8-6 17h-34z" fill="#dcdcdc"/><path d="M36 84l20-6M40 92l20-10" stroke="#b8b8b8" stroke-width="1"/><path d="M0 86h30l4 13h-34z" fill="#4a4038"/><path d="M2 92l22-3" stroke="#a88050" stroke-width="2"/><path d="M58 99c1-12 8-19 22-23l8-3h12l10 4c14 3 24 10 28 22z" fill="#9db5c9"/><path d="M80 76c3 7 14 9 22 1" stroke="#88a0b4" stroke-width="1.200" fill="none"/><path d="M82 66h20v12c-6 5-14 5-20 0z" fill="#c89888"/><path d="M62 42c-3 6-3 18 1 26l5 2v-28z" fill="#15181f"/><path d="M118 44c3 6 3 16-1 24l-4 2v-26z" fill="#15181f"/><ellipse cx="91.500" cy="62" rx="20" ry="22" fill="url(#hf)"/><path d="M62 56c-5-12-3-30 8-37 3-5 10-8 16-6 6-4 15-3 21 2 8 2 14 10 14 20 2 8 1 18-3 24-1.500 3-3 3-3.500 1 .5-7-1-12-3-15-1 2-3 3-5 3-6 1-13 .5-18-1-5 2.500-12 3-17 1.500-3 3-4 8-3.500 14-2.500 1-5-2-6-6.500z" fill="#131318"/><path d="M70 16c-3-3-6-2-7 0M96 10c3-3.500 7-3 9-.5M119 24c4 0 5 3 4 5M84 11c-1-3 1-5 3-5" stroke="#131318" stroke-width="1.600" fill="none"/><ellipse cx="83" cy="53.500" rx="3.300" ry="1.300" fill="#2a1a1a"/><ellipse cx="101" cy="54" rx="3.300" ry="1.300" fill="#2a1a1a"/><path d="M90 58c-.5 4-1 6-2.500 8 1.500 1.200 4 1.200 5.500.3" stroke="#b88070" stroke-width="1" fill="none"/><path d="M86 73c3 1.200 8 1.200 11 0" stroke="#b46868" stroke-width="2" fill="none"/><circle cx="79" cy="62" r=".8" fill="#6a4038"/><path d="M66 62c1 9 5 15 12 18" stroke="#15181f" stroke-width="1.500" fill="none"/><rect x="75" y="78" width="7" height="3.200" rx="1.600" fill="#0c0c10" transform="rotate(25 78 79.500)"/></g></svg></div>
<div class="a" style="left:1413px;top:245.200px;width:59.500px;height:14px;border-radius:3px;background:rgba(40,40,40,.55)"></div>
<div class="t" style="left:1416.2px;top:248.10px;font-size:9.8px;color:#f4f4f4;transform:scaleX(0.843);">HHWC AYLUS</div>
<div class="t" style="left:1291.0px;top:301.10px;font-size:19.6px;color:#fff;font-weight:700;transform:scaleX(0.967);-webkit-text-stroke:0;">Monica</div>
<div class="a" style="left:1238.8px;top:344.2px;width:45.7px;height:13.800px;border-radius:3px;background:rgba(44,44,44,.92)"></div>
<svg style="left:1240.3999999999999px;top:345.70000000000005px" width="10" height="11"><rect x="3.300" y="0.800" width="3.400" height="6" rx="1.700" fill="#e8504e"/><path d="M1.800 5.200a3.200 3.200 0 0 0 6.400 0M5 8.400v1.800" fill="none" stroke="#e8504e" stroke-width="1"/><path d="M9 0.500L1.200 10.500" stroke="#e8504e" stroke-width="1.200"/></svg>
<div class="t" style="left:1253.6px;top:346.10px;font-size:9.8px;color:#f4f4f4;transform:scaleX(0.899);">Monica</div>
<div class="a" style="left:1413.3px;top:344.2px;width:49.6px;height:13.800px;border-radius:3px;background:rgba(44,44,44,.92)"></div>
<svg style="left:1414.8999999999999px;top:345.70000000000005px" width="10" height="11"><rect x="3.300" y="0.800" width="3.400" height="6" rx="1.700" fill="#e8504e"/><path d="M1.800 5.200a3.200 3.200 0 0 0 6.400 0M5 8.400v1.800" fill="none" stroke="#e8504e" stroke-width="1"/><path d="M9 0.500L1.200 10.500" stroke="#e8504e" stroke-width="1.200"/></svg>
<div class="t" style="left:1428.1px;top:346.10px;font-size:9.8px;color:#f4f4f4;transform:scaleX(0.957);">Z Nuoyi</div>
<div class="t" style="left:1291.0px;top:400.10px;font-size:19.6px;color:#fff;font-weight:700;transform:scaleX(0.967);-webkit-text-stroke:0;">Haoran</div>
<div class="a" style="left:1238.8px;top:443.0px;width:45.7px;height:13.800px;border-radius:3px;background:rgba(44,44,44,.92)"></div>
<svg style="left:1240.3999999999999px;top:444.5px" width="10" height="11"><rect x="3.300" y="0.800" width="3.400" height="6" rx="1.700" fill="#e8504e"/><path d="M1.800 5.200a3.200 3.200 0 0 0 6.400 0M5 8.400v1.800" fill="none" stroke="#e8504e" stroke-width="1"/><path d="M9 0.500L1.200 10.500" stroke="#e8504e" stroke-width="1.200"/></svg>
<div class="t" style="left:1253.6px;top:445.10px;font-size:9.8px;color:#f4f4f4;transform:scaleX(0.884);">Haoran</div>
<div class="a" style="left:1410.400px;top:358px;width:178px;height:101px;border:2.200px solid #1fe08f;box-shadow:0 0 0 .6px #150a14"></div>
<div class="t" style="left:1471.6px;top:400.10px;font-size:19.6px;color:#fff;font-weight:700;transform:scaleX(0.934);-webkit-text-stroke:0;">yuhan</div>
<div class="a" style="left:1413.3px;top:443.0px;width:42.7px;height:13.800px;border-radius:3px;background:rgba(44,44,44,.92)"></div>
<svg style="left:1414.8999999999999px;top:444.5px" width="10" height="11"><rect x="3.300" y="0.800" width="3.400" height="6" rx="1.700" fill="#e8504e"/><path d="M1.800 5.200a3.200 3.200 0 0 0 6.400 0M5 8.400v1.800" fill="none" stroke="#e8504e" stroke-width="1"/><path d="M9 0.500L1.200 10.500" stroke="#e8504e" stroke-width="1.200"/></svg>
<div class="t" style="left:1428.1px;top:445.10px;font-size:9.8px;color:#f4f4f4;transform:scaleX(0.951);">yuhan</div>
<div class="a" style="left:1294.400px;top:479px;width:58.600px;height:58px;border-radius:6px;background:#1f1f1f"></div>
<div class="a" style="left:1238.8px;top:541.8px;width:60.7px;height:13.800px;border-radius:3px;background:rgba(44,44,44,.92)"></div>
<svg style="left:1240.3999999999999px;top:543.3px" width="10" height="11"><rect x="3.300" y="0.800" width="3.400" height="6" rx="1.700" fill="#e8504e"/><path d="M1.800 5.200a3.200 3.200 0 0 0 6.400 0M5 8.400v1.800" fill="none" stroke="#e8504e" stroke-width="1"/><path d="M9 0.500L1.200 10.500" stroke="#e8504e" stroke-width="1.200"/></svg>
<div class="t" style="left:1253.6px;top:544.10px;font-size:9.8px;color:#f4f4f4;transform:scaleX(0.857);">Jack Zhang</div>
<div class="t" style="left:1484.0px;top:499.10px;font-size:19.6px;color:#fff;font-weight:700;transform:scaleX(1.027);-webkit-text-stroke:0;">tim</div>
<div class="a" style="left:1413.3px;top:541.8px;width:31.5px;height:13.800px;border-radius:3px;background:rgba(44,44,44,.92)"></div>
<svg style="left:1414.8999999999999px;top:543.3px" width="10" height="11"><rect x="3.300" y="0.800" width="3.400" height="6" rx="1.700" fill="#e8504e"/><path d="M1.800 5.200a3.200 3.200 0 0 0 6.400 0M5 8.400v1.800" fill="none" stroke="#e8504e" stroke-width="1"/><path d="M9 0.500L1.200 10.500" stroke="#e8504e" stroke-width="1.200"/></svg>
<div class="t" style="left:1428.1px;top:544.10px;font-size:9.8px;color:#f4f4f4;transform:scaleX(1.087);">tim</div>
<div class="t" style="left:1299.0px;top:598.10px;font-size:19.6px;color:#fff;font-weight:700;transform:scaleX(0.963);-webkit-text-stroke:0;">Ziyao</div>
<div class="a" style="left:1238.8px;top:640.6px;width:38.3px;height:13.800px;border-radius:3px;background:rgba(44,44,44,.92)"></div>
<svg style="left:1240.3999999999999px;top:642.1px" width="10" height="11"><rect x="3.300" y="0.800" width="3.400" height="6" rx="1.700" fill="#e8504e"/><path d="M1.800 5.200a3.200 3.200 0 0 0 6.400 0M5 8.400v1.800" fill="none" stroke="#e8504e" stroke-width="1"/><path d="M9 0.500L1.200 10.500" stroke="#e8504e" stroke-width="1.200"/></svg>
<div class="t" style="left:1253.6px;top:643.10px;font-size:9.8px;color:#f4f4f4;transform:scaleX(0.876);">Ziyao</div>
<div class="a" style="left:1470px;top:577.600px;width:59px;height:58.500px;border-radius:7px;background:#fff"></div>
<div class="t" style="left:1472.5px;top:593.10px;font-size:33px;color:#161616;transform:scaleX(0.874);-webkit-text-stroke:0;font-weight:400;">WIP</div>
<div class="a" style="left:1413.3px;top:640.6px;width:75.1px;height:13.800px;border-radius:3px;background:rgba(44,44,44,.92)"></div>
<svg style="left:1414.8999999999999px;top:642.1px" width="10" height="11"><rect x="3.300" y="0.800" width="3.400" height="6" rx="1.700" fill="#e8504e"/><path d="M1.800 5.200a3.200 3.200 0 0 0 6.400 0M5 8.400v1.800" fill="none" stroke="#e8504e" stroke-width="1"/><path d="M9 0.500L1.200 10.500" stroke="#e8504e" stroke-width="1.200"/></svg>
<div class="t" style="left:1428.1px;top:643.10px;font-size:9.8px;color:#f4f4f4;transform:scaleX(0.907);">Andrew Zhang</div>
<div class="t" style="left:1306.8px;top:696.10px;font-size:19.6px;color:#fff;font-weight:700;transform:scaleX(1.010);-webkit-text-stroke:0;">Mia</div>
<div class="a" style="left:1238.8px;top:739.4px;width:31.9px;height:13.800px;border-radius:3px;background:rgba(44,44,44,.92)"></div>
<svg style="left:1240.3999999999999px;top:740.9px" width="10" height="11"><rect x="3.300" y="0.800" width="3.400" height="6" rx="1.700" fill="#e8504e"/><path d="M1.800 5.200a3.200 3.200 0 0 0 6.400 0M5 8.400v1.800" fill="none" stroke="#e8504e" stroke-width="1"/><path d="M9 0.500L1.200 10.500" stroke="#e8504e" stroke-width="1.200"/></svg>
<div class="t" style="left:1253.6px;top:741.10px;font-size:9.8px;color:#f4f4f4;transform:scaleX(0.925);">Mia</div>
<div class="t" style="left:1438.0px;top:696.10px;font-size:19.6px;color:#fff;font-weight:700;transform:scaleX(0.979);-webkit-text-stroke:0;">Haoting Yang</div>
<div class="a" style="left:1413.3px;top:739.4px;width:70.8px;height:13.800px;border-radius:3px;background:rgba(44,44,44,.92)"></div>
<svg style="left:1414.8999999999999px;top:740.9px" width="10" height="11"><rect x="3.300" y="0.800" width="3.400" height="6" rx="1.700" fill="#e8504e"/><path d="M1.800 5.200a3.200 3.200 0 0 0 6.400 0M5 8.400v1.800" fill="none" stroke="#e8504e" stroke-width="1"/><path d="M9 0.500L1.200 10.500" stroke="#e8504e" stroke-width="1.200"/></svg>
<div class="t" style="left:1428.1px;top:741.10px;font-size:9.8px;color:#f4f4f4;transform:scaleX(0.915);">Haoting Yang</div>
<div class="a" style="left:1470.200px;top:280.800px;width:59px;height:59.200px;overflow:hidden;border-radius:7px"><svg style="left:0;top:0" width="59" height="59.200" viewBox="0 0 59 59.200"><defs><radialGradient id="dg" cx=".5" cy=".5" r=".6"><stop offset="0" stop-color="#f4eee8"/><stop offset="1" stop-color="#d8ccc2"/></radialGradient><filter id="dbl" x="-5%" y="-5%" width="110%" height="110%"><feGaussianBlur stdDeviation=".6"/></filter></defs><rect width="59" height="59.200" fill="#d4cbc4"/><g filter="url(#dbl)"><rect width="59" height="8" fill="#c8b8a8"/><rect x="8" y="0" width="24" height="5" fill="#e8dcd0"/><path d="M0 30l59-8M0 42l59-10M0 54l59-12M10 8l8 51M30 8l10 51M48 8l8 51" stroke="#b8c4cc" stroke-width="1" opacity=".6"/><path d="M8 24c4-6 14-8 22-6l10 14c6 2 12 8 14 18l-6 6-38 2-6-10c-2-10 0-18 4-24z" fill="url(#dg)"/><ellipse cx="13" cy="16" rx="6" ry="7" fill="#efe6de"/><ellipse cx="7" cy="47" rx="4" ry="3.500" fill="#e8b8a8"/><ellipse cx="17" cy="41" rx="3" ry="2.500" fill="#e8b8a8"/><ellipse cx="56" cy="49" rx="3.500" ry="4" fill="#e8b8a8"/><ellipse cx="27" cy="18" rx="6" ry="11" fill="#5a4c46" transform="rotate(15 27 18)"/><ellipse cx="50" cy="20" rx="6.500" ry="12" fill="#4e423c" transform="rotate(-20 50 20)"/><ellipse cx="38" cy="19" rx="12" ry="13" fill="#f0e8e0"/><path d="M28 10c4-6 16-6 20 0-4 3-16 3-20 0z" fill="#8a7a72"/><ellipse cx="33" cy="16" rx="3" ry="2.200" fill="#4a3c36"/><ellipse cx="43" cy="17" rx="3" ry="2.200" fill="#4a3c36"/><ellipse cx="37" cy="22.500" rx="2.600" ry="2" fill="#1c1614"/><path d="M34 26c2 1.500 5 1.500 7 0" stroke="#6a5a52" stroke-width="1" fill="none"/><ellipse cx="32" cy="47" rx="8" ry="9" fill="#38a8cc"/><ellipse cx="42.500" cy="48.500" rx="8.500" ry="9.500" fill="#3fb4d6"/><path d="M37 39c1 6 1 12-1 18" stroke="#2a8cb0" stroke-width="1" fill="none"/></g></svg></div>
<div class="a" style="left:1593px;top:130px;width:7px;height:640px;background:#171717;border-radius:0 0 0 4px"></div>
<svg style="left:1595px;top:764px" width="6" height="6"><path d="M0.500 0.500h6l-3 4.500z" fill="#9a9a9a"/></svg>
<div class="a" style="left:1595.500px;top:774.500px;width:9px;height:10px;border-radius:50%;background:#9c9c9c"></div>
<div class="a" style="left:1595.500px;top:786.500px;width:9px;height:10px;border-radius:50%;background:#9c9c9c"></div>
<div class="a" style="left:1596px;top:779px;width:4px;height:1px;background:#2a2a2a;"></div>
<div class="a" style="left:1596px;top:791px;width:4px;height:1px;background:#2a2a2a;"></div>
<div class="a" style="left:1597px;top:253px;width:3px;height:22px;border-radius:2px 0 0 2px;background:#c4c4c4"></div>
<svg style="left:1594px;top:131px" width="6" height="5"><path d="M3 0.500l3 4h-6z" fill="#9a9a9a"/></svg>
<!-- ===== notes / status bar / taskbar ===== -->
<div class="t" style="left:250.0px;top:819.10px;font-size:10.6px;color:#e4e4e4;transform:scaleX(1.015);">Click to add notes</div>
<div class="t" style="left:1413.0px;top:804.10px;font-size:11.2px;color:#6e6e6e;transform:scaleX(0.928);-webkit-text-stroke:0;">Activate Windows</div>
<div class="t" style="left:1413.0px;top:818.10px;font-size:8px;color:#626262;transform:scaleX(0.934);-webkit-text-stroke:0;">Go to Settings to activate Windows.</div>
<div class="t" style="left:8.0px;top:857.10px;font-size:9.2px;color:#dcdcdc;transform:scaleX(0.850);">Slide 6 of 28</div>
<svg style="left:65.5px;top:855px" width="11" height="10"><path d="M4.500 0.800v8l-4 .5v-8zM4.500 0.800l4-.5v4" fill="none" stroke="#dcdcdc" stroke-width="1"/><path d="M6.500 6l3.500 3.500M10 6l-3.500 3.500" stroke="#dcdcdc" stroke-width="1"/></svg>
<svg style="left:88px;top:854.5px" width="11" height="11"><circle cx="5" cy="1.800" r="1.300" fill="none" stroke="#dcdcdc" stroke-width=".9"/><path d="M1 3.800h8M5 3.800v3M5 6.800l-2.500 3.500M5 6.800l1 1.200" fill="none" stroke="#dcdcdc" stroke-width="1"/><path d="M7 7.500l3.500 3.500M10.500 7.500l-3.500 3.500" stroke="#dcdcdc" stroke-width="1"/></svg>
<div class="t" style="left:101.3px;top:857.10px;font-size:9.2px;color:#f0f0f0;font-weight:700;transform:scaleX(0.807);-webkit-text-stroke:0;">Accessibility: Investigate</div>
<svg style="left:1292px;top:853.5px" width="12" height="12"><path d="M3 3l3-2.500 3 2.500" fill="none" stroke="#dcdcdc" stroke-width="1"/><path d="M0 5.500h12M0 8h12M0 10.500h12" stroke="#dcdcdc" stroke-width="1.200"/></svg>
<div class="t" style="left:1305.4px;top:856.10px;font-size:9.2px;color:#f0f0f0;transform:scaleX(0.841);">Notes</div>
<div class="a" style="left:1339.4px;top:852px;width:29.6px;height:16px;background:#2b2b2b;"></div>
<svg style="left:1348.5px;top:855px" width="12" height="10"><rect x="0.600" y="0.600" width="10.800" height="8.800" rx="1" fill="none" stroke="#e0e0e0" stroke-width="1.200"/><path d="M3.500 2.500h5.500v2.500h-5.500zM2.500 7h7" fill="none" stroke="#e0e0e0" stroke-width="1"/></svg>
<svg style="left:1377.5px;top:855px" width="12" height="10"><rect x="0.500" y="0.500" width="4.300" height="3.500" fill="none" stroke="#dcdcdc" stroke-width="1"/><rect x="6.800" y="0.500" width="4.300" height="3.500" fill="none" stroke="#dcdcdc" stroke-width="1"/><rect x="0.500" y="6" width="4.300" height="3.500" fill="none" stroke="#dcdcdc" stroke-width="1"/><rect x="6.800" y="6" width="4.300" height="3.500" fill="none" stroke="#dcdcdc" stroke-width="1"/></svg>
<svg style="left:1407px;top:854.5px" width="11" height="10"><path d="M5.500 1.500c-1.500-1-3.500-1-5 0v7.500c1.500-1 3.500-1 5 0zM5.500 1.500c1.500-1 3.500-1 5 0v7.500c-1.500-1-3.500-1-5 0z" fill="none" stroke="#dcdcdc" stroke-width="1"/><path d="M1.800 3.500h2.400M1.800 5.500h2.400M6.800 3.500h2.400M6.800 5.500h2.400" stroke="#bdbdbd" stroke-width=".7"/></svg>
<svg style="left:1436.5px;top:854.5px" width="10" height="11"><path d="M0 1h10M1 1v5.500h8v-5.500M5 6.500v3M2.500 10h5" fill="none" stroke="#dcdcdc" stroke-width="1"/><path d="M4 2.500v2.500l2.200-1.250z" fill="#dcdcdc"/></svg>
<div class="a" style="left:1461px;top:859.8px;width:6px;height:1px;background:#9a9a9a;"></div>
<div class="a" style="left:1471px;top:859.8px;width:72.6px;height:1px;background:#a8a8a8;"></div>
<div class="a" style="left:1505px;top:855.8px;width:4.4px;height:9px;background:#c8c8c8;border-radius:1px;"></div>
<div class="a" style="left:1548px;top:859.8px;width:5.5px;height:1px;background:#c8c8c8;"></div>
<div class="a" style="left:1550.3px;top:857.2px;width:1px;height:6px;background:#c8c8c8;"></div>
<div class="t" style="left:1563.0px;top:856.10px;font-size:9.2px;color:#f0f0f0;transform:scaleX(0.790);">100%</div>
<svg style="left:1592px;top:854px" width="10" height="12"><rect x="2.500" y="3" width="6" height="6" fill="none" stroke="#dcdcdc" stroke-width="1"/><path d="M5.500 0l2 2h-4zM5.500 12l2-2h-4zM0 6l2-2v4z" fill="#dcdcdc"/></svg>
<div class="a" style="left:15px;top:866.500px;width:20px;height:20px;border-radius:50%;background:#232323"></div>
<svg style="left:19px;top:870px" width="13" height="13"><path d="M1.500 9.500l1-3 6-6 2 2-6 6zM0.500 12h10" fill="none" stroke="#23d18b" stroke-width="1.400"/></svg>
<div class="a" style="left:14.5px;top:884px;width:2px;height:8.5px;background:#e04a1c;"></div>
<div class="a" style="left:18.5px;top:887px;width:2px;height:5.5px;background:#e04a1c;"></div>
<div class="a" style="left:22.5px;top:889px;width:2px;height:3.5px;background:#e04a1c;"></div>
<div class="a" style="left:26.5px;top:890.5px;width:4px;height:1.5px;background:#e04a1c;"></div>
<div class="t" style="left:37.5px;top:874.10px;font-size:9.6px;color:#f0f0f0;transform:scaleX(0.883);">S&amp;P 500</div>
<div class="t" style="left:37.5px;top:886.10px;font-size:9.6px;color:#ea6a6a;transform:scaleX(0.865);">-0.57%</div>
<svg style="left:546px;top:877px" width="18" height="18"><defs><linearGradient id="wl" x1="0" x2="1" y1="0" y2="1"><stop offset="0" stop-color="#5fd0fb"/><stop offset="1" stop-color="#1a8de0"/></linearGradient></defs><rect x="0" y="0" width="8.500" height="8.500" rx="1" fill="url(#wl)"/><rect x="9.500" y="0" width="8.500" height="8.500" rx="1" fill="url(#wl)"/><rect x="0" y="9.500" width="8.500" height="8.500" rx="1" fill="url(#wl)"/><rect x="9.500" y="9.500" width="8.500" height="8.500" rx="1" fill="url(#wl)"/></svg>
<div class="a" style="left:573.800px;top:874.500px;width:72.700px;height:22px;border-radius:11px;background:#2c2c2c;border:1px solid #343434"></div>
<svg style="left:591px;top:880.5px" width="10" height="10"><circle cx="4" cy="4" r="3.200" fill="none" stroke="#f0f0f0" stroke-width="1.300"/><path d="M6.300 6.300l3.200 3.200" stroke="#f0f0f0" stroke-width="1.400"/></svg>
<div class="t" style="left:604.5px;top:882.10px;font-size:9.8px;color:#f0f0f0;transform:scaleX(0.870);">Search</div>
<svg style="left:655.5px;top:876.0px" width="20" height="20" viewBox="-10 -10 20 20"><rect x="-8" y="-3" width="11" height="9" rx="1" fill="#7a7a7a"/><rect x="-3" y="-7" width="12" height="10" rx="1" fill="#e8e8e8"/></svg>
<svg style="left:688.0px;top:876.0px" width="20" height="20" viewBox="-10 -10 20 20"><circle r="8.500" fill="#e8453c"/><path d="M0 0L-7.400 4.200A8.500 8.500 0 0 0 0 8.500L3.600 2z" fill="#34a853"/><path d="M0 0L3.600 2 0 8.500A8.500 8.500 0 0 0 7.400 -4.200H0z" fill="#fbbc05"/><circle r="3.800" fill="#fff"/><circle r="3" fill="#4285f4"/><circle cx="7" cy="-7" r="4.500" fill="#b8b8b8"/><circle cx="7" cy="-8" r="1.600" fill="#8a8a8a"/></svg>
<svg style="left:719.5px;top:876.0px" width="20" height="20" viewBox="-10 -10 20 20"><circle r="9" fill="#5865f2"/><path d="M-5 -3c3-1.500 7-1.500 10 0 1.500 2.500 2 5 1.800 7.500-1.500 1-2.500 1.500-3.500 1.500l-.8-1.300c-1.500.5-3.500.5-5 0l-.8 1.300c-1 0-2-.5-3.500-1.500-.2-2.500.3-5 1.800-7.500z" fill="#fff"/><circle cx="-2" cy="1.500" r="1.200" fill="#5865f2"/><circle cx="2" cy="1.500" r="1.200" fill="#5865f2"/></svg>
<svg style="left:751.7px;top:876.0px" width="20" height="20" viewBox="-10 -10 20 20"><circle cx="4.500" cy="-5" r="2.800" fill="#7b83eb"/><circle cx="-0.500" cy="-6" r="3.300" fill="#5059c9"/><rect x="1" y="-2" width="8.500" height="9" rx="2" fill="#7b83eb"/><rect x="-5" y="-2.500" width="10" height="11" rx="2" fill="#5059c9"/><rect x="-9" y="-4" width="9" height="9" rx="1" fill="#4b53bc"/><path d="M-6.800 -1.800h4.600M-4.500 -1.800v5" stroke="#fff" stroke-width="1.200"/></svg>
<svg style="left:784.3px;top:876.0px" width="20" height="20" viewBox="-10 -10 20 20"><circle r="9" fill="#1ed760"/><path d="M-5 -2.500c3.500-1 7.500-.6 10.500 1M-4.500 0.800c3-1 6-.6 8.700.9M-3.800 3.800c2.400-.7 4.800-.4 6.800.8" stroke="#121212" stroke-width="1.500" fill="none" stroke-linecap="round"/></svg>
<svg style="left:815.8px;top:876.0px" width="20" height="20" viewBox="-10 -10 20 20"><rect x="-3" y="-8" width="12" height="16" rx="1.500" fill="#ca64ea"/><rect x="3" y="-8" width="6" height="5.300" fill="#e8a8f8"/><rect x="3" y="2.700" width="6" height="5.300" fill="#9332bf"/><rect x="-9" y="-5" width="10" height="10" rx="1" fill="#7719aa"/><path d="M-6.300 2.500v-5l4.600 5v-5" stroke="#fff" stroke-width="1.200" fill="none"/></svg>
<svg style="left:848.0px;top:876.0px" width="20" height="20" viewBox="-10 -10 20 20"><circle r="9" fill="#2a2a2a" stroke="#555" stroke-width="1"/><path d="M-1 7c-5-2-5-9 1-13 5 3 6 10 1 13z" fill="#f08a24"/><path d="M0 -6c2-2 4-2.500 5-2-0.500 2-2 3.500-4 4z" fill="#6bbf3a"/><path d="M-2 5c-2-3-1-7 2-9" stroke="#fbd08a" stroke-width="1.200" fill="none"/></svg>
<svg style="left:880.5px;top:876.0px" width="20" height="20" viewBox="-10 -10 20 20"><path d="M-9 3.500l9-7.500h-5.500l1.800-2h6.200l6 5.500c2 3 0 7-4.500 8s-8.500-1-9-4.500z" fill="#ea7600"/><circle cx="3.300" cy="2.500" r="4" fill="#fff"/><circle cx="3.300" cy="2.500" r="2.200" fill="#265787"/></svg>
<svg style="left:912.7px;top:876.0px" width="20" height="20" viewBox="-10 -10 20 20"><path d="M-9 -6.500h6l2 2h10v11.500h-18z" fill="#e8a818"/><rect x="-9" y="-2.500" width="18" height="10" rx="1" fill="#ffd75e"/><rect x="-5" y="3" width="10" height="4.500" fill="#3f97e0"/></svg>
<div class="a" style="left:940px;top:871px;width:30px;height:30px;border-radius:4px;background:#2b2b2b;border:1px solid #353535"></div>
<svg style="left:944.6px;top:876.0px" width="20" height="20" viewBox="-10 -10 20 20"><circle cx="1.500" cy="0" r="8" fill="#ed6c47"/><path d="M1.500 -8a8 8 0 0 1 8 8h-8z" fill="#ff8f6b"/><rect x="-9" y="-5" width="10" height="10" rx="1" fill="#c43e1c"/><path d="M-5.800 3v-6h2.500a2 2 0 0 1 0 4h-2.500" stroke="#fff" stroke-width="1.300" fill="none"/></svg>
<div class="a" style="left:948px;top:897.5px;width:13px;height:1.5px;background:#4cc2ff;border-radius:1px;"></div>
<div class="a" style="left:972px;top:870.500px;width:30px;height:31px;border-radius:4px;background:#7a3340;border:1px solid #8a4a55"></div>
<svg style="left:975.5px;top:876.0px" width="20" height="20" viewBox="-10 -10 20 20"><circle r="8.500" fill="#0b5cff"/></svg>
<div class="t" style="left:979.5px;top:885.10px;font-size:4.5px;color:#fff;font-weight:700;transform:scaleX(1.021);-webkit-text-stroke:0;">zoom</div>
<div class="a" style="left:990px;top:871.500px;width:10.500px;height:10.500px;border-radius:3px;background:#e8323c"></div>
<div class="t" style="left:992.8px;top:874.10px;font-size:8px;color:#fff;transform:scaleX(1.011);-webkit-text-stroke:0;">2</div>
<div class="a" style="left:980px;top:897.5px;width:13px;height:1.5px;background:#e0a0a8;border-radius:1px;"></div>
<svg style="left:1009.0px;top:876.0px" width="20" height="20" viewBox="-10 -10 20 20"><path d="M-9 3.500l9-7.500h-5.500l1.800-2h6.200l6 5.500c2 3 0 7-4.500 8s-8.500-1-9-4.500z" fill="#ea7600"/><circle cx="3.300" cy="2.500" r="4" fill="#fff"/><circle cx="3.300" cy="2.500" r="2.200" fill="#265787"/></svg>
<svg style="left:1041.5px;top:876.0px" width="20" height="20" viewBox="-10 -10 20 20"><rect x="-1.800" y="-9.500" width="3.600" height="5" rx=".8" fill="#8f9aa8" transform="rotate(0)"/><rect x="-1.800" y="-9.500" width="3.600" height="5" rx=".8" fill="#8f9aa8" transform="rotate(45)"/><rect x="-1.800" y="-9.500" width="3.600" height="5" rx=".8" fill="#8f9aa8" transform="rotate(90)"/><rect x="-1.800" y="-9.500" width="3.600" height="5" rx=".8" fill="#8f9aa8" transform="rotate(135)"/><rect x="-1.800" y="-9.500" width="3.600" height="5" rx=".8" fill="#8f9aa8" transform="rotate(180)"/><rect x="-1.800" y="-9.500" width="3.600" height="5" rx=".8" fill="#8f9aa8" transform="rotate(225)"/><rect x="-1.800" y="-9.500" width="3.600" height="5" rx=".8" fill="#8f9aa8" transform="rotate(270)"/><rect x="-1.800" y="-9.500" width="3.600" height="5" rx=".8" fill="#8f9aa8" transform="rotate(315)"/><circle r="7" fill="#8f9aa8"/><circle r="4.200" fill="#2f6fc0"/><circle r="2.200" fill="#1c1c1c"/></svg>
<div class="a" style="left:696.5px;top:897.5px;width:3px;height:1.5px;background:#8a8a8a;border-radius:1px;"></div>
<div class="a" style="left:1017.5px;top:897.5px;width:3px;height:1.5px;background:#8a8a8a;border-radius:1px;"></div>
<div class="a" style="left:1050.0px;top:897.5px;width:3px;height:1.5px;background:#8a8a8a;border-radius:1px;"></div>
<svg style="left:1447px;top:882.5px" width="10" height="7"><path d="M0.800 6l4.200-4.500 4.200 4.500" fill="none" stroke="#f0f0f0" stroke-width="1.300"/></svg>
<svg style="left:1468px;top:879.5px" width="16" height="13"><rect x="1" y="0.500" width="3.600" height="6.500" rx="1.800" fill="none" stroke="#5fb8d8" stroke-width="1.100"/><path d="M0 5.500a2.800 2.800 0 0 0 5.600 0" fill="none" stroke="#5fb8d8" stroke-width=".9"/><path d="M15 4l-8 3 3.500 1.300 1.200 3.700z" fill="none" stroke="#5fb8d8" stroke-width="1.100"/></svg>
<svg style="left:1492px;top:880.5px" width="13" height="10"><path d="M0.500 3.500a8.500 8.500 0 0 1 12 0M2.500 5.800a5.600 5.600 0 0 1 8 0M4.500 8a2.800 2.800 0 0 1 4 0" fill="none" stroke="#f0f0f0" stroke-width="1.100"/><circle cx="6.500" cy="9.300" r=".9" fill="#f0f0f0"/></svg>
<svg style="left:1509.5px;top:880.5px" width="14" height="10"><path d="M0.500 3.500h2.500l3-2.800v8.600l-3-2.800h-2.500z" fill="none" stroke="#f0f0f0" stroke-width="1"/><path d="M8 3a3 3 0 0 1 0 4M9.800 1.500a5 5 0 0 1 0 7M11.600 0.300a7 7 0 0 1 0 9.400" fill="none" stroke="#f0f0f0" stroke-width=".9"/></svg>
<div class="t" style="left:1542.0px;top:875.10px;font-size:9.6px;color:#f4f4f4;transform:scaleX(0.909);">9:07 AM</div>
<div class="t" style="left:1534.0px;top:887.10px;font-size:9.6px;color:#f4f4f4;transform:scaleX(0.937);">8/20/2025</div>
<svg style="left:1580.5px;top:880px" width="11" height="12"><path d="M5.500 1a3.800 3.800 0 0 0-3.800 3.800v3l-1.200 1.700h10l-1.200-1.700v-3a3.800 3.800 0 0 0-3.800-3.800z" fill="#e8e8e8"/><path d="M4 10.500a1.600 1.600 0 0 0 3 0z" fill="#e8e8e8"/><circle cx="8.800" cy="2.500" r="2.200" fill="#1c1c1c"/><path d="M7.800 1.500h2l-2 2h2" stroke="#e8e8e8" stroke-width=".7" fill="none"/></svg>
</div>
</body>
</html>
